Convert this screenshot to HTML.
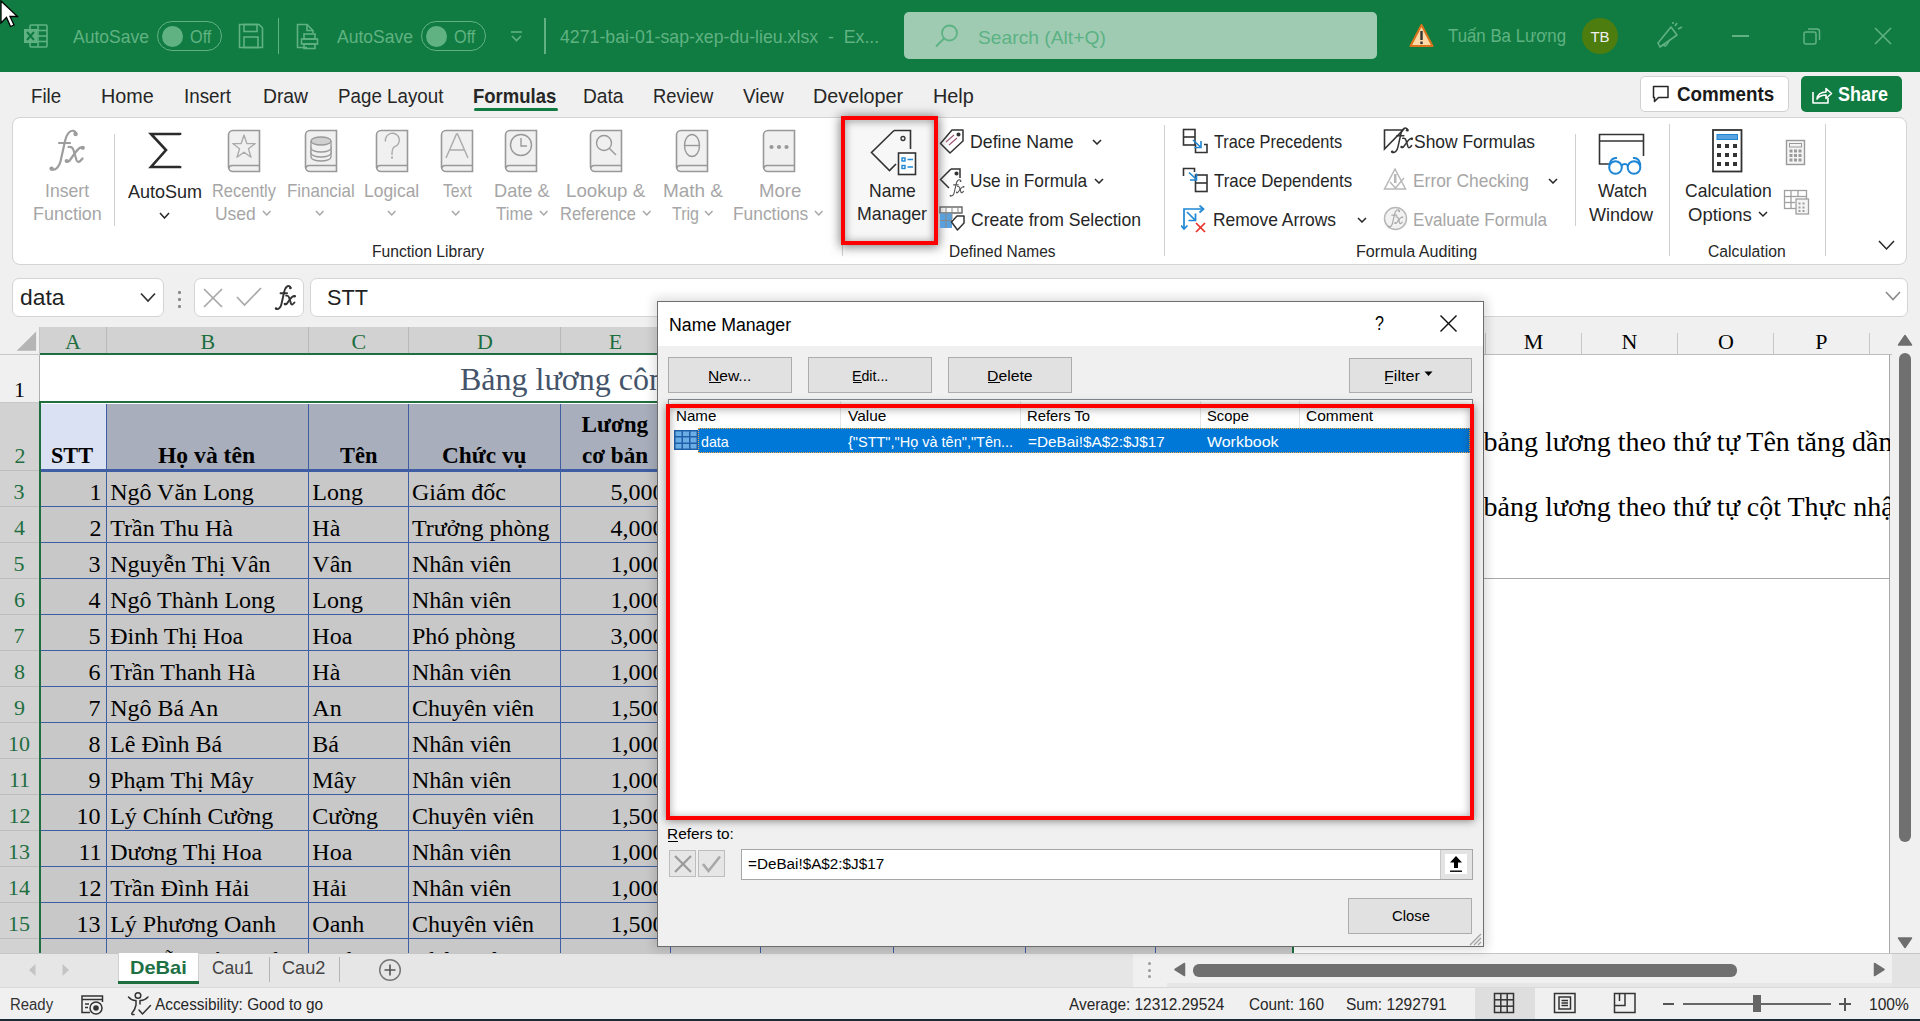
<!DOCTYPE html>
<html><head><meta charset="utf-8"><style>
html,body{margin:0;padding:0;}
body{width:1920px;height:1021px;position:relative;overflow:hidden;background:#f0f0f0}

</style></head><body>
<div style="position:absolute;left:0px;top:0px;width:1920px;height:72px;background:#107c41"></div>
<svg style="position:absolute;left:22px;top:22px;" width="28" height="28" viewBox="0 0 28 28"><g fill="none" stroke="#60b283" stroke-width="1.6">
<rect x="8" y="3" width="17" height="22" rx="1"/>
<line x1="8" y1="8.5" x2="25" y2="8.5"/><line x1="8" y1="14" x2="25" y2="14"/><line x1="8" y1="19.5" x2="25" y2="19.5"/>
<line x1="16" y1="3" x2="16" y2="25"/></g>
<rect x="2" y="7" width="13" height="14" fill="#60b283"/>
<path d="M5 10 L12 18 M12 10 L5 18" stroke="#107c41" stroke-width="2"/></svg>
<span style="position:absolute;left:72.50px;top:26.85px;font-family:'Liberation Sans', sans-serif;font-size:19px;line-height:1;font-weight:400;color:#60b283;white-space:pre;transform:scaleX(0.9227);transform-origin:0 0;">AutoSave</span>
<div style="position:absolute;left:157px;top:21px;width:63px;height:28px;border:1.3px solid #60b283;border-radius:16px;box-sizing:content-box"></div>
<div style="position:absolute;left:162px;top:25.5px;width:21px;height:21px;border-radius:50%;background:#60b283"></div>
<span style="position:absolute;left:190.00px;top:26.85px;font-family:'Liberation Sans', sans-serif;font-size:19px;line-height:1;font-weight:400;color:#60b283;white-space:pre;transform:scaleX(0.8556);transform-origin:0 0;">Off</span>
<svg style="position:absolute;left:238px;top:23px;" width="26" height="26" viewBox="0 0 26 26"><g fill="none" stroke="#60b283" stroke-width="1.6">
<path d="M1.5 1.5 H21 L24.5 5 V24.5 H1.5 Z"/><rect x="6" y="1.5" width="13" height="7"/><rect x="6" y="14" width="14" height="10.5"/></g></svg>
<div style="position:absolute;left:277.5px;top:18px;width:1.5px;height:36px;background:#60b283"></div>
<svg style="position:absolute;left:295px;top:23px;" width="26" height="27" viewBox="0 0 26 27"><g fill="none" stroke="#60b283" stroke-width="1.6">
<path d="M12 24.5 H2.5 V1.5 H12 L18 7.5 V10"/><path d="M12 1.5 V7.5 H18"/>
<rect x="9" y="11" width="11" height="5"/><rect x="6.5" y="16" width="16" height="5"/><rect x="9" y="21" width="11" height="4.5"/></g></svg>
<span style="position:absolute;left:336.50px;top:26.85px;font-family:'Liberation Sans', sans-serif;font-size:19px;line-height:1;font-weight:400;color:#60b283;white-space:pre;transform:scaleX(0.9227);transform-origin:0 0;">AutoSave</span>
<div style="position:absolute;left:421px;top:21px;width:63px;height:28px;border:1.3px solid #60b283;border-radius:16px;box-sizing:content-box"></div>
<div style="position:absolute;left:426px;top:25.5px;width:21px;height:21px;border-radius:50%;background:#60b283"></div>
<span style="position:absolute;left:454.00px;top:26.85px;font-family:'Liberation Sans', sans-serif;font-size:19px;line-height:1;font-weight:400;color:#60b283;white-space:pre;transform:scaleX(0.8556);transform-origin:0 0;">Off</span>
<svg style="position:absolute;left:509px;top:30px;" width="15" height="13" viewBox="0 0 15 13"><g fill="none" stroke="#60b283" stroke-width="1.6"><line x1="2" y1="2" x2="13" y2="2"/><path d="M3 6 L7.5 10.5 L12 6"/></g></svg>
<div style="position:absolute;left:544px;top:18px;width:1.5px;height:36px;background:#60b283"></div>
<span style="position:absolute;left:560.00px;top:27.15px;font-family:'Liberation Sans', sans-serif;font-size:19px;line-height:1;font-weight:400;color:#60b283;white-space:pre;transform:scaleX(0.9329);transform-origin:0 0;">4271-bai-01-sap-xep-du-lieu.xlsx  -  Ex...</span>
<div style="position:absolute;left:904px;top:12px;width:473px;height:47.3px;background:#a0cbb3;border-radius:5px"></div>
<svg style="position:absolute;left:934px;top:23px;" width="26" height="26" viewBox="0 0 26 26"><g fill="none" stroke="#5bb283" stroke-width="1.8"><circle cx="15.5" cy="10" r="7.5"/><line x1="10" y1="15.5" x2="2" y2="23.5"/></g></svg>
<span style="position:absolute;left:977.50px;top:27.55px;font-family:'Liberation Sans', sans-serif;font-size:19px;line-height:1;font-weight:400;color:#5bb283;white-space:pre;transform:scaleX(1.0131);transform-origin:0 0;">Search (Alt+Q)</span>
<svg style="position:absolute;left:1408px;top:23px;" width="27" height="25" viewBox="0 0 27 25"><path d="M13.5 2 L24.5 23 H2.5 Z" fill="#fcd9a6" stroke="#d9731c" stroke-width="2" stroke-linejoin="round"/><rect x="12.3" y="8" width="2.4" height="9" fill="#333"/><rect x="12.3" y="18.5" width="2.4" height="2.6" fill="#333"/></svg>
<span style="position:absolute;left:1447.50px;top:25.85px;font-family:'Liberation Sans', sans-serif;font-size:19px;line-height:1;font-weight:400;color:#60b283;white-space:pre;transform:scaleX(0.8854);transform-origin:0 0;">Tuấn Ba Lương</span>
<div style="position:absolute;left:1582px;top:18px;width:36px;height:36px;background:#4d7c0f;border-radius:50%"></div>
<span style="position:absolute;left:1590.42px;top:29.25px;font-family:'Liberation Sans', sans-serif;font-size:15px;line-height:1;font-weight:400;color:#f0f0f0;white-space:pre;">TB</span>
<svg style="position:absolute;left:1655px;top:21px;" width="30" height="28" viewBox="0 0 30 28"><g fill="none" stroke="#60b283" stroke-width="1.6" stroke-linejoin="round"><path d="M3 22 L16 6 L22 14 L5 26 Z"/><path d="M8 23 Q10 28 14 20"/><line x1="20" y1="5" x2="22" y2="2"/><line x1="23" y1="8" x2="27" y2="6"/><line x1="18" y1="3" x2="18" y2="1"/></g></svg>
<div style="position:absolute;left:1732px;top:35px;width:17px;height:1.5px;background:#60b283"></div>
<svg style="position:absolute;left:1802px;top:26px;" width="20" height="20" viewBox="0 0 20 20"><g fill="none" stroke="#60b283" stroke-width="1.5"><rect x="2" y="6" width="12" height="12" rx="2"/><path d="M6 3 H15 A2.5 2.5 0 0 1 17.5 5.5 V14"/></g></svg>
<svg style="position:absolute;left:1873px;top:26px;" width="20" height="20" viewBox="0 0 20 20"><g stroke="#60b283" stroke-width="1.6"><line x1="2" y1="2" x2="18" y2="18"/><line x1="18" y1="2" x2="2" y2="18"/></g></svg>
<span style="position:absolute;left:30.99px;top:85.88px;font-family:'Liberation Sans', sans-serif;font-size:20.5px;line-height:1;font-weight:400;color:#262626;white-space:pre;transform:scaleX(0.9105);transform-origin:0 0;">File</span>
<span style="position:absolute;left:101.34px;top:85.88px;font-family:'Liberation Sans', sans-serif;font-size:20.5px;line-height:1;font-weight:400;color:#262626;white-space:pre;transform:scaleX(0.9647);transform-origin:0 0;">Home</span>
<span style="position:absolute;left:184.48px;top:85.88px;font-family:'Liberation Sans', sans-serif;font-size:20.5px;line-height:1;font-weight:400;color:#262626;white-space:pre;transform:scaleX(0.9175);transform-origin:0 0;">Insert</span>
<span style="position:absolute;left:262.56px;top:85.88px;font-family:'Liberation Sans', sans-serif;font-size:20.5px;line-height:1;font-weight:400;color:#262626;white-space:pre;transform:scaleX(0.9419);transform-origin:0 0;">Draw</span>
<span style="position:absolute;left:337.59px;top:85.88px;font-family:'Liberation Sans', sans-serif;font-size:20.5px;line-height:1;font-weight:400;color:#262626;white-space:pre;transform:scaleX(0.9150);transform-origin:0 0;">Page Layout</span>
<span style="position:absolute;left:473.40px;top:85.88px;font-family:'Liberation Sans', sans-serif;font-size:20.5px;line-height:1;font-weight:700;color:#262626;white-space:pre;transform:scaleX(0.9024);transform-origin:0 0;">Formulas</span>
<span style="position:absolute;left:583.47px;top:85.88px;font-family:'Liberation Sans', sans-serif;font-size:20.5px;line-height:1;font-weight:400;color:#262626;white-space:pre;transform:scaleX(0.9347);transform-origin:0 0;">Data</span>
<span style="position:absolute;left:652.71px;top:85.88px;font-family:'Liberation Sans', sans-serif;font-size:20.5px;line-height:1;font-weight:400;color:#262626;white-space:pre;transform:scaleX(0.8944);transform-origin:0 0;">Review</span>
<span style="position:absolute;left:743.00px;top:85.88px;font-family:'Liberation Sans', sans-serif;font-size:20.5px;line-height:1;font-weight:400;color:#262626;white-space:pre;transform:scaleX(0.9264);transform-origin:0 0;">View</span>
<span style="position:absolute;left:813.03px;top:85.88px;font-family:'Liberation Sans', sans-serif;font-size:20.5px;line-height:1;font-weight:400;color:#262626;white-space:pre;transform:scaleX(0.9653);transform-origin:0 0;">Developer</span>
<span style="position:absolute;left:933.33px;top:85.88px;font-family:'Liberation Sans', sans-serif;font-size:20.5px;line-height:1;font-weight:400;color:#262626;white-space:pre;transform:scaleX(0.9666);transform-origin:0 0;">Help</span>
<div style="position:absolute;left:474px;top:108px;width:84px;height:3px;background:#107c41;border-radius:2px"></div>
<div style="position:absolute;left:1640px;top:76px;width:148.5px;height:36px;background:#fff;border:1px solid #d1d1d1;border-radius:5px;box-sizing:border-box"></div>
<svg style="position:absolute;left:1651px;top:84px;" width="20" height="20" viewBox="0 0 20 20"><path d="M2.5 2.5 H17 V13.5 H7.5 L3.5 17.5 V13.5 H2.5 Z" fill="none" stroke="#262626" stroke-width="1.5" stroke-linejoin="round"/></svg>
<span style="position:absolute;left:1676.60px;top:85.02px;font-family:'Liberation Sans', sans-serif;font-size:19.5px;line-height:1;font-weight:700;color:#1a1a1a;white-space:pre;transform:scaleX(0.9651);transform-origin:0 0;">Comments</span>
<div style="position:absolute;left:1801px;top:76px;width:101px;height:36px;background:#107c41;border-radius:5px"></div>
<svg style="position:absolute;left:1810px;top:83px;" width="24" height="22" viewBox="0 0 24 22"><g fill="none" stroke="#fff" stroke-width="1.6" stroke-linejoin="round"><path d="M3 9 V20 H18 V15"/><path d="M7 16 Q8 9 16 9 V5.5 L21.5 10.5 L16 15.5 V12 Q10 12 7 16 Z"/></g></svg>
<span style="position:absolute;left:1837.50px;top:85.02px;font-family:'Liberation Sans', sans-serif;font-size:19.5px;line-height:1;font-weight:700;color:#fff;white-space:pre;transform:scaleX(0.9199);transform-origin:0 0;">Share</span>
<div style="position:absolute;left:12px;top:117px;width:1895px;height:148px;background:#fff;border:1px solid #d4d4d4;border-radius:8px;box-sizing:border-box"></div>
<svg style="position:absolute;left:48px;top:129px;" width="39" height="46" viewBox="0 0 39 46"><g transform="scale(1.0000)" fill="none" stroke="#9d9d9d" stroke-width="2.200" stroke-linecap="round">
<path d="M28 4.8 C27.5 1.6 24 0.8 21.5 3 C19 5 17.6 9 16.6 14 L12.6 32 C11.5 37 8 41.5 4.2 40.6"/>
<path d="M11 14 H22"/>
<path d="M20.5 18 C23 17.5 24.5 18 25.5 21 L28.5 31 C29.5 34 31.5 33.5 34.5 29.5"/>
<path d="M35 18.6 C32 17.6 30 20 27 24 L22 31 C20.5 33 19 33 18 32"/>
</g><g transform="scale(1.0000)" fill="#9d9d9d"><circle cx="27.6" cy="5" r="2.2"/><circle cx="3.6" cy="39.6" r="2.2"/><circle cx="34.8" cy="18.8" r="2.1"/><circle cx="18.6" cy="32" r="2"/></g></svg>
<span style="position:absolute;left:44.78px;top:182.03px;font-family:'Liberation Sans', sans-serif;font-size:18.2px;line-height:1;font-weight:400;color:#a6a6a6;white-space:pre;transform:scaleX(0.9677);transform-origin:0 0;">Insert</span>
<span style="position:absolute;left:32.76px;top:205.28px;font-family:'Liberation Sans', sans-serif;font-size:18.2px;line-height:1;font-weight:400;color:#a6a6a6;white-space:pre;transform:scaleX(0.9868);transform-origin:0 0;">Function</span>
<div style="position:absolute;left:114px;top:134px;width:1.2999999999999972px;height:92px;background:#d0d0d0"></div>
<svg style="position:absolute;left:146px;top:131px;" width="38" height="40" viewBox="0 0 38 40"><path d="M34 4 V3 H5 L20 19 L5 36 H34 V35" fill="none" stroke="#2b2b2b" stroke-width="2.6" stroke-linejoin="miter"/></svg>
<span style="position:absolute;left:127.50px;top:183.28px;font-family:'Liberation Sans', sans-serif;font-size:18.2px;line-height:1;font-weight:400;color:#262626;white-space:pre;transform:scaleX(0.9910);transform-origin:0 0;">AutoSum</span>
<svg style="position:absolute;left:159px;top:211.5px;" width="11" height="7.5" viewBox="0 0 11 7.5"><path d="M1 1 L5.5 6.0 L10 1" fill="none" stroke="#262626" stroke-width="1.5"/></svg>
<svg style="position:absolute;left:227.4px;top:129px;" width="35" height="44" viewBox="0 0 35 44"><path d="M6 1.5 H32.5 V42.5 H6 A4.5 4.5 0 0 1 1.5 38 V6 A4.5 4.5 0 0 1 6 1.5 Z" fill="#f0f0f0" stroke="#999" stroke-width="1.6"/>
<path d="M1.8 39 A3.5 3.5 0 0 1 5.5 36.5 H32.5" fill="none" stroke="#999" stroke-width="1.6"/><path d="M17 6 L19.8 14.5 L28.3 14.6 L21.4 19.8 L24 28.3 L17 23.2 L10 28.3 L12.6 19.8 L5.7 14.6 L14.2 14.5 Z" fill="none" stroke="#aaa" stroke-width="1.3" stroke-linejoin="round"/></svg>
<svg style="position:absolute;left:303.6px;top:129px;" width="35" height="44" viewBox="0 0 35 44"><path d="M6 1.5 H32.5 V42.5 H6 A4.5 4.5 0 0 1 1.5 38 V6 A4.5 4.5 0 0 1 6 1.5 Z" fill="#f0f0f0" stroke="#999" stroke-width="1.6"/>
<path d="M1.8 39 A3.5 3.5 0 0 1 5.5 36.5 H32.5" fill="none" stroke="#999" stroke-width="1.6"/><g fill="#f0f0f0" stroke="#999" stroke-width="1.3"><path d="M7 21 V28 A10 4 0 0 0 27 28 V21"/><path d="M7 17 V24 A10 4 0 0 0 27 24 V17"/><path d="M7 12 V19 A10 4 0 0 0 27 19 V12"/><ellipse cx="17" cy="12" rx="10" ry="4" fill="#d0d0d0"/></g></svg>
<svg style="position:absolute;left:374.7px;top:129px;" width="35" height="44" viewBox="0 0 35 44"><path d="M6 1.5 H32.5 V42.5 H6 A4.5 4.5 0 0 1 1.5 38 V6 A4.5 4.5 0 0 1 6 1.5 Z" fill="#f0f0f0" stroke="#999" stroke-width="1.6"/>
<path d="M1.8 39 A3.5 3.5 0 0 1 5.5 36.5 H32.5" fill="none" stroke="#999" stroke-width="1.6"/><path d="M10.5 12.5 A7 7 0 1 1 19 18 Q17 20 17 24 V26" fill="none" stroke="#aaa" stroke-width="1.4"/><rect x="16" y="27.5" width="2" height="2" fill="#aaa"/></svg>
<svg style="position:absolute;left:439.7px;top:129px;" width="35" height="44" viewBox="0 0 35 44"><path d="M6 1.5 H32.5 V42.5 H6 A4.5 4.5 0 0 1 1.5 38 V6 A4.5 4.5 0 0 1 6 1.5 Z" fill="#f0f0f0" stroke="#999" stroke-width="1.6"/>
<path d="M1.8 39 A3.5 3.5 0 0 1 5.5 36.5 H32.5" fill="none" stroke="#999" stroke-width="1.6"/><path d="M6 29 L16.5 5 H17.5 L28 29 M9.5 21 H24.5" fill="none" stroke="#aaa" stroke-width="1.4"/></svg>
<svg style="position:absolute;left:504px;top:129px;" width="35" height="44" viewBox="0 0 35 44"><path d="M6 1.5 H32.5 V42.5 H6 A4.5 4.5 0 0 1 1.5 38 V6 A4.5 4.5 0 0 1 6 1.5 Z" fill="#f0f0f0" stroke="#999" stroke-width="1.6"/>
<path d="M1.8 39 A3.5 3.5 0 0 1 5.5 36.5 H32.5" fill="none" stroke="#999" stroke-width="1.6"/><circle cx="17" cy="16" r="10.5" fill="none" stroke="#999" stroke-width="1.4"/><path d="M17 9 V17 H23" fill="none" stroke="#999" stroke-width="1.4"/></svg>
<svg style="position:absolute;left:589px;top:129px;" width="35" height="44" viewBox="0 0 35 44"><path d="M6 1.5 H32.5 V42.5 H6 A4.5 4.5 0 0 1 1.5 38 V6 A4.5 4.5 0 0 1 6 1.5 Z" fill="#f0f0f0" stroke="#999" stroke-width="1.6"/>
<path d="M1.8 39 A3.5 3.5 0 0 1 5.5 36.5 H32.5" fill="none" stroke="#999" stroke-width="1.6"/><circle cx="15" cy="14" r="7.5" fill="none" stroke="#999" stroke-width="1.4"/><line x1="20.5" y1="19.5" x2="27" y2="26" stroke="#999" stroke-width="1.4"/></svg>
<svg style="position:absolute;left:675px;top:129px;" width="35" height="44" viewBox="0 0 35 44"><path d="M6 1.5 H32.5 V42.5 H6 A4.5 4.5 0 0 1 1.5 38 V6 A4.5 4.5 0 0 1 6 1.5 Z" fill="#f0f0f0" stroke="#999" stroke-width="1.6"/>
<path d="M1.8 39 A3.5 3.5 0 0 1 5.5 36.5 H32.5" fill="none" stroke="#999" stroke-width="1.6"/><ellipse cx="17" cy="16.5" rx="7.5" ry="11" fill="none" stroke="#999" stroke-width="1.4"/><line x1="9.5" y1="16.5" x2="24.5" y2="16.5" stroke="#999" stroke-width="1.4"/></svg>
<svg style="position:absolute;left:762px;top:129px;" width="35" height="44" viewBox="0 0 35 44"><path d="M6 1.5 H32.5 V42.5 H6 A4.5 4.5 0 0 1 1.5 38 V6 A4.5 4.5 0 0 1 6 1.5 Z" fill="#f0f0f0" stroke="#999" stroke-width="1.6"/>
<path d="M1.8 39 A3.5 3.5 0 0 1 5.5 36.5 H32.5" fill="none" stroke="#999" stroke-width="1.6"/><g fill="#999"><circle cx="9.5" cy="18" r="2.1"/><circle cx="17" cy="18" r="2.1"/><circle cx="24.5" cy="18" r="2.1"/></g></svg>
<span style="position:absolute;left:211.60px;top:182.03px;font-family:'Liberation Sans', sans-serif;font-size:18.2px;line-height:1;font-weight:400;color:#a6a6a6;white-space:pre;transform:scaleX(0.9021);transform-origin:0 0;">Recently</span>
<span style="position:absolute;left:215.29px;top:205.28px;font-family:'Liberation Sans', sans-serif;font-size:18.2px;line-height:1;font-weight:400;color:#a6a6a6;white-space:pre;transform:scaleX(0.9605);transform-origin:0 0;">Used</span>
<svg style="position:absolute;left:262px;top:210px;" width="9.5" height="6.5" viewBox="0 0 9.5 6.5"><path d="M1 1 L4.75 5.0 L8.5 1" fill="none" stroke="#a6a6a6" stroke-width="1.5"/></svg>
<span style="position:absolute;left:286.57px;top:182.03px;font-family:'Liberation Sans', sans-serif;font-size:18.2px;line-height:1;font-weight:400;color:#a6a6a6;white-space:pre;transform:scaleX(0.9294);transform-origin:0 0;">Financial</span>
<svg style="position:absolute;left:315px;top:210px;" width="9.5" height="6.5" viewBox="0 0 9.5 6.5"><path d="M1 1 L4.75 5.0 L8.5 1" fill="none" stroke="#a6a6a6" stroke-width="1.5"/></svg>
<span style="position:absolute;left:364.04px;top:182.03px;font-family:'Liberation Sans', sans-serif;font-size:18.2px;line-height:1;font-weight:400;color:#a6a6a6;white-space:pre;transform:scaleX(0.9578);transform-origin:0 0;">Logical</span>
<svg style="position:absolute;left:386.5px;top:210px;" width="9.5" height="6.5" viewBox="0 0 9.5 6.5"><path d="M1 1 L4.75 5.0 L8.5 1" fill="none" stroke="#a6a6a6" stroke-width="1.5"/></svg>
<span style="position:absolute;left:442.50px;top:182.03px;font-family:'Liberation Sans', sans-serif;font-size:18.2px;line-height:1;font-weight:400;color:#a6a6a6;white-space:pre;transform:scaleX(0.8633);transform-origin:0 0;">Text</span>
<svg style="position:absolute;left:451px;top:210px;" width="9.5" height="6.5" viewBox="0 0 9.5 6.5"><path d="M1 1 L4.75 5.0 L8.5 1" fill="none" stroke="#a6a6a6" stroke-width="1.5"/></svg>
<span style="position:absolute;left:494.00px;top:182.03px;font-family:'Liberation Sans', sans-serif;font-size:18.2px;line-height:1;font-weight:400;color:#a6a6a6;white-space:pre;">Date &</span>
<span style="position:absolute;left:495.75px;top:205.28px;font-family:'Liberation Sans', sans-serif;font-size:18.2px;line-height:1;font-weight:400;color:#a6a6a6;white-space:pre;transform:scaleX(0.9274);transform-origin:0 0;">Time</span>
<svg style="position:absolute;left:539px;top:210px;" width="9.5" height="6.5" viewBox="0 0 9.5 6.5"><path d="M1 1 L4.75 5.0 L8.5 1" fill="none" stroke="#a6a6a6" stroke-width="1.5"/></svg>
<span style="position:absolute;left:566.47px;top:182.03px;font-family:'Liberation Sans', sans-serif;font-size:18.2px;line-height:1;font-weight:400;color:#a6a6a6;white-space:pre;transform:scaleX(1.0301);transform-origin:0 0;">Lookup &</span>
<span style="position:absolute;left:559.59px;top:205.28px;font-family:'Liberation Sans', sans-serif;font-size:18.2px;line-height:1;font-weight:400;color:#a6a6a6;white-space:pre;transform:scaleX(0.9058);transform-origin:0 0;">Reference</span>
<svg style="position:absolute;left:641.5px;top:210px;" width="9.5" height="6.5" viewBox="0 0 9.5 6.5"><path d="M1 1 L4.75 5.0 L8.5 1" fill="none" stroke="#a6a6a6" stroke-width="1.5"/></svg>
<span style="position:absolute;left:662.71px;top:182.03px;font-family:'Liberation Sans', sans-serif;font-size:18.2px;line-height:1;font-weight:400;color:#a6a6a6;white-space:pre;transform:scaleX(1.0401);transform-origin:0 0;">Math &</span>
<span style="position:absolute;left:672.00px;top:205.28px;font-family:'Liberation Sans', sans-serif;font-size:18.2px;line-height:1;font-weight:400;color:#a6a6a6;white-space:pre;transform:scaleX(0.8804);transform-origin:0 0;">Trig</span>
<svg style="position:absolute;left:704px;top:210px;" width="9.5" height="6.5" viewBox="0 0 9.5 6.5"><path d="M1 1 L4.75 5.0 L8.5 1" fill="none" stroke="#a6a6a6" stroke-width="1.5"/></svg>
<span style="position:absolute;left:758.98px;top:182.03px;font-family:'Liberation Sans', sans-serif;font-size:18.2px;line-height:1;font-weight:400;color:#a6a6a6;white-space:pre;transform:scaleX(1.0230);transform-origin:0 0;">More</span>
<span style="position:absolute;left:732.80px;top:205.28px;font-family:'Liberation Sans', sans-serif;font-size:18.2px;line-height:1;font-weight:400;color:#a6a6a6;white-space:pre;transform:scaleX(0.9549);transform-origin:0 0;">Functions</span>
<svg style="position:absolute;left:814px;top:210px;" width="9.5" height="6.5" viewBox="0 0 9.5 6.5"><path d="M1 1 L4.75 5.0 L8.5 1" fill="none" stroke="#a6a6a6" stroke-width="1.5"/></svg>
<span style="position:absolute;left:371.54px;top:243.15px;font-family:'Liberation Sans', sans-serif;font-size:16.3px;line-height:1;font-weight:400;color:#262626;white-space:pre;transform:scaleX(0.9606);transform-origin:0 0;">Function Library</span>
<div style="position:absolute;left:841.5px;top:230px;width:1.2999999999999545px;height:26px;background:#d0d0d0"></div>
<div style="position:absolute;left:845px;top:121px;width:89px;height:120px;background:#f7f7f7"></div>
<svg style="position:absolute;left:868px;top:127px;" width="52" height="52" viewBox="0 0 52 52"><path d="M26 3.5 H42.5 V22" fill="none" stroke="#333" stroke-width="1.6"/>
<path d="M26 3.5 L3.5 25.5 L21.5 43.5 L28 37" fill="none" stroke="#333" stroke-width="1.6" stroke-linejoin="miter"/>
<circle cx="35" cy="11.5" r="2" fill="none" stroke="#333" stroke-width="1.3"/>
<rect x="30.5" y="26" width="17" height="21.5" fill="#fff" stroke="#333" stroke-width="1.6"/>
<g fill="none" stroke="#1e86d4" stroke-width="1.4"><rect x="34" y="31" width="3" height="3"/><rect x="34" y="38.5" width="3" height="3"/></g>
<g stroke="#1e86d4" stroke-width="1.5"><line x1="39.5" y1="32.5" x2="45" y2="32.5"/><line x1="39.5" y1="40" x2="45" y2="40"/></g></svg>
<span style="position:absolute;left:869.03px;top:182.03px;font-family:'Liberation Sans', sans-serif;font-size:18.2px;line-height:1;font-weight:400;color:#262626;white-space:pre;transform:scaleX(0.9652);transform-origin:0 0;">Name</span>
<span style="position:absolute;left:857.02px;top:205.28px;font-family:'Liberation Sans', sans-serif;font-size:18.2px;line-height:1;font-weight:400;color:#262626;white-space:pre;transform:scaleX(0.9756);transform-origin:0 0;">Manager</span>
<div style="position:absolute;left:841px;top:116px;width:97px;height:129px;border:4px solid #f00;box-sizing:border-box;box-shadow:0 1px 10px 1px rgba(0,0,0,.5), inset 0 1px 9px rgba(0,0,0,.4)"></div>
<svg style="position:absolute;left:938px;top:127px;" width="28" height="28" viewBox="0 0 28 28"><g fill="none" stroke="#333" stroke-width="1.5" stroke-linejoin="round"><path d="M14 3 H25 V14 L12 26 L2.5 16.5 Z"/><circle cx="20.5" cy="7.5" r="1.3" fill="#333"/><path d="M8 15 L16 8 M11 18 L19 11" stroke="#a05a7a" stroke-width="1.2"/></g></svg>
<svg style="position:absolute;left:938px;top:166px;" width="30" height="30" viewBox="0 0 30 30"><g fill="none" stroke="#333" stroke-width="1.5"><path d="M13 3 H22 V12"/><path d="M13 3 L2.5 13.5 L11 22"/><circle cx="18.5" cy="7.5" r="1.3" fill="#333"/></g></svg>
<svg style="position:absolute;left:938px;top:205px;" width="28" height="26" viewBox="0 0 28 26"><g><rect x="2" y="2" width="22" height="6" fill="none" stroke="#555" stroke-width="1.3"/><rect x="2" y="8" width="12" height="15" fill="#5aa0dc"/><path d="M2 8 H24 M2 15.5 H14 M8 2 V23 M14 2 V14 M20 2 V8" stroke="#888" stroke-width="1"/></g><path d="M13.5 17 L19 11 H26 V18 L19.5 25 Z" fill="#fff" stroke="#333" stroke-width="1.5" stroke-linejoin="round"/></svg>
<span style="position:absolute;left:969.52px;top:132.53px;font-family:'Liberation Sans', sans-serif;font-size:18.2px;line-height:1;font-weight:400;color:#262626;white-space:pre;transform:scaleX(0.9759);transform-origin:0 0;">Define Name</span>
<svg style="position:absolute;left:1091.5px;top:138.5px;" width="10" height="6.5" viewBox="0 0 10 6.5"><path d="M1 1 L5.0 5.0 L9 1" fill="none" stroke="#262626" stroke-width="1.5"/></svg>
<svg style="position:absolute;left:949px;top:179px;" width="17" height="20" viewBox="0 0 17 20"><g transform="scale(0.4186)" fill="none" stroke="#555" stroke-width="2.628" stroke-linecap="round">
<path d="M28 4.8 C27.5 1.6 24 0.8 21.5 3 C19 5 17.6 9 16.6 14 L12.6 32 C11.5 37 8 41.5 4.2 40.6"/>
<path d="M11 14 H22"/>
<path d="M20.5 18 C23 17.5 24.5 18 25.5 21 L28.5 31 C29.5 34 31.5 33.5 34.5 29.5"/>
<path d="M35 18.6 C32 17.6 30 20 27 24 L22 31 C20.5 33 19 33 18 32"/>
</g><g transform="scale(0.4186)" fill="#555"><circle cx="27.6" cy="5" r="2.2"/><circle cx="3.6" cy="39.6" r="2.2"/><circle cx="34.8" cy="18.8" r="2.1"/><circle cx="18.6" cy="32" r="2"/></g></svg>
<span style="position:absolute;left:969.55px;top:171.53px;font-family:'Liberation Sans', sans-serif;font-size:18.2px;line-height:1;font-weight:400;color:#262626;white-space:pre;transform:scaleX(0.9497);transform-origin:0 0;">Use in Formula</span>
<svg style="position:absolute;left:1094px;top:177.5px;" width="10" height="6.5" viewBox="0 0 10 6.5"><path d="M1 1 L5.0 5.0 L9 1" fill="none" stroke="#262626" stroke-width="1.5"/></svg>
<span style="position:absolute;left:970.50px;top:210.53px;font-family:'Liberation Sans', sans-serif;font-size:18.2px;line-height:1;font-weight:400;color:#262626;white-space:pre;transform:scaleX(0.9670);transform-origin:0 0;">Create from Selection</span>
<span style="position:absolute;left:948.55px;top:243.15px;font-family:'Liberation Sans', sans-serif;font-size:16.3px;line-height:1;font-weight:400;color:#262626;white-space:pre;transform:scaleX(0.9498);transform-origin:0 0;">Defined Names</span>
<div style="position:absolute;left:1163.5px;top:124.5px;width:1.2999999999999545px;height:131.5px;background:#d0d0d0"></div>
<svg style="position:absolute;left:1181px;top:127px;" width="28" height="28" viewBox="0 0 28 28"><g fill="none" stroke="#333" stroke-width="1.6"><rect x="2.5" y="2.5" width="11.5" height="15.5"/><line x1="2.5" y1="10" x2="14" y2="10"/><path d="M14.5 17.5 V25.5 H26 V17.5 H23"/></g><g fill="none" stroke="#1e86d4" stroke-width="1.6"><line x1="12" y1="13" x2="19.5" y2="20"/><path d="M13.5 20.5 H20 V14"/></g></svg>
<svg style="position:absolute;left:1181px;top:166px;" width="28" height="28" viewBox="0 0 28 28"><g fill="none" stroke="#333" stroke-width="1.6"><path d="M2.5 10 V2.5 H13.5 V6"/><rect x="14.5" y="9" width="11.5" height="16.5"/><line x1="14.5" y1="17" x2="26" y2="17"/></g><g fill="none" stroke="#1e86d4" stroke-width="1.6"><line x1="8" y1="6.5" x2="15" y2="13"/><path d="M9 14 H15.5 V7.5"/></g></svg>
<svg style="position:absolute;left:1181px;top:205px;" width="28" height="28" viewBox="0 0 28 28"><g fill="none" stroke="#1e86d4" stroke-width="1.7"><path d="M3 24 V4 H22"/><path d="M18.5 0.5 L22.5 4 L18.5 7.5"/><path d="M0 20.5 L3 24 L6.5 20.5"/><line x1="6" y1="7" x2="14" y2="15"/><path d="M7.5 15.5 H14.5 V8.5"/></g><g stroke="#e8332a" stroke-width="1.7"><line x1="15" y1="18" x2="24" y2="27"/><line x1="24" y1="18" x2="15" y2="27"/></g></svg>
<span style="position:absolute;left:1214.00px;top:132.53px;font-family:'Liberation Sans', sans-serif;font-size:18.2px;line-height:1;font-weight:400;color:#262626;white-space:pre;transform:scaleX(0.8965);transform-origin:0 0;">Trace Precedents</span>
<span style="position:absolute;left:1214.00px;top:171.53px;font-family:'Liberation Sans', sans-serif;font-size:18.2px;line-height:1;font-weight:400;color:#262626;white-space:pre;transform:scaleX(0.9270);transform-origin:0 0;">Trace Dependents</span>
<span style="position:absolute;left:1213.04px;top:210.53px;font-family:'Liberation Sans', sans-serif;font-size:18.2px;line-height:1;font-weight:400;color:#262626;white-space:pre;transform:scaleX(0.9589);transform-origin:0 0;">Remove Arrows</span>
<svg style="position:absolute;left:1356.5px;top:216.5px;" width="10" height="6.5" viewBox="0 0 10 6.5"><path d="M1 1 L5.0 5.0 L9 1" fill="none" stroke="#262626" stroke-width="1.5"/></svg>
<svg style="position:absolute;left:1382px;top:127px;" width="32" height="30" viewBox="0 0 32 30"><path d="M2.5 3 H21 L2.5 22 Z" fill="none" stroke="#333" stroke-width="1.6"/></svg>
<svg style="position:absolute;left:1390px;top:127px;" width="25" height="30" viewBox="0 0 25 30"><g transform="scale(0.6279)" fill="none" stroke="#333" stroke-width="2.389" stroke-linecap="round">
<path d="M28 4.8 C27.5 1.6 24 0.8 21.5 3 C19 5 17.6 9 16.6 14 L12.6 32 C11.5 37 8 41.5 4.2 40.6"/>
<path d="M11 14 H22"/>
<path d="M20.5 18 C23 17.5 24.5 18 25.5 21 L28.5 31 C29.5 34 31.5 33.5 34.5 29.5"/>
<path d="M35 18.6 C32 17.6 30 20 27 24 L22 31 C20.5 33 19 33 18 32"/>
</g><g transform="scale(0.6279)" fill="#333"><circle cx="27.6" cy="5" r="2.2"/><circle cx="3.6" cy="39.6" r="2.2"/><circle cx="34.8" cy="18.8" r="2.1"/><circle cx="18.6" cy="32" r="2"/></g></svg>
<svg style="position:absolute;left:1382px;top:165px;" width="32" height="30" viewBox="0 0 32 30"><g fill="none" stroke="#b8b8b8" stroke-width="1.5"><path d="M13 4 L23.5 24 H2.5 Z"/><path d="M8 17 L13.5 23 L22 13"/></g><rect x="12" y="9" width="2.5" height="9" fill="#b8b8b8"/></svg>
<svg style="position:absolute;left:1382px;top:204px;" width="32" height="30" viewBox="0 0 32 30"><circle cx="13.5" cy="14.5" r="11" fill="#f2f2f2" stroke="#b8b8b8" stroke-width="1.5"/></svg>
<svg style="position:absolute;left:1386.5px;top:209px;" width="18" height="21" viewBox="0 0 18 21"><g transform="scale(0.4419)" fill="none" stroke="#aaa" stroke-width="2.716" stroke-linecap="round">
<path d="M28 4.8 C27.5 1.6 24 0.8 21.5 3 C19 5 17.6 9 16.6 14 L12.6 32 C11.5 37 8 41.5 4.2 40.6"/>
<path d="M11 14 H22"/>
<path d="M20.5 18 C23 17.5 24.5 18 25.5 21 L28.5 31 C29.5 34 31.5 33.5 34.5 29.5"/>
<path d="M35 18.6 C32 17.6 30 20 27 24 L22 31 C20.5 33 19 33 18 32"/>
</g><g transform="scale(0.4419)" fill="#aaa"><circle cx="27.6" cy="5" r="2.2"/><circle cx="3.6" cy="39.6" r="2.2"/><circle cx="34.8" cy="18.8" r="2.1"/><circle cx="18.6" cy="32" r="2"/></g></svg>
<span style="position:absolute;left:1414.00px;top:132.53px;font-family:'Liberation Sans', sans-serif;font-size:18.2px;line-height:1;font-weight:400;color:#262626;white-space:pre;transform:scaleX(0.9584);transform-origin:0 0;">Show Formulas</span>
<span style="position:absolute;left:1413.04px;top:171.53px;font-family:'Liberation Sans', sans-serif;font-size:18.2px;line-height:1;font-weight:400;color:#a6a6a6;white-space:pre;transform:scaleX(0.9566);transform-origin:0 0;">Error Checking</span>
<svg style="position:absolute;left:1547.5px;top:177.5px;" width="10" height="6.5" viewBox="0 0 10 6.5"><path d="M1 1 L5.0 5.0 L9 1" fill="none" stroke="#262626" stroke-width="1.5"/></svg>
<span style="position:absolute;left:1413.06px;top:210.53px;font-family:'Liberation Sans', sans-serif;font-size:18.2px;line-height:1;font-weight:400;color:#a6a6a6;white-space:pre;transform:scaleX(0.9409);transform-origin:0 0;">Evaluate Formula</span>
<span style="position:absolute;left:1355.51px;top:243.15px;font-family:'Liberation Sans', sans-serif;font-size:16.3px;line-height:1;font-weight:400;color:#262626;white-space:pre;transform:scaleX(0.9916);transform-origin:0 0;">Formula Auditing</span>
<div style="position:absolute;left:1575px;top:134px;width:1.2999999999999545px;height:92px;background:#d0d0d0"></div>
<svg style="position:absolute;left:1596px;top:131px;" width="52" height="46" viewBox="0 0 52 46"><g fill="none" stroke="#333" stroke-width="1.6"><path d="M13 33 H3.5 V3.5 H47.5 V25"/><line x1="3.5" y1="10" x2="47.5" y2="10"/></g><g fill="#fff" stroke="#1e86d4" stroke-width="2"><circle cx="19.5" cy="36.5" r="6.3"/><circle cx="38" cy="36.5" r="6.3"/><path d="M25.5 34.5 Q28.7 31.5 32 34.5" fill="none"/><path d="M13.3 34 Q15 26 21 27" fill="none"/><path d="M44.5 34 Q43 26 37 27" fill="none"/></g></svg>
<span style="position:absolute;left:1598.00px;top:181.53px;font-family:'Liberation Sans', sans-serif;font-size:18.2px;line-height:1;font-weight:400;color:#262626;white-space:pre;transform:scaleX(0.9648);transform-origin:0 0;">Watch</span>
<span style="position:absolute;left:1589.00px;top:205.53px;font-family:'Liberation Sans', sans-serif;font-size:18.2px;line-height:1;font-weight:400;color:#262626;white-space:pre;transform:scaleX(0.9916);transform-origin:0 0;">Window</span>
<div style="position:absolute;left:1669px;top:124px;width:1.2999999999999545px;height:132px;background:#d0d0d0"></div>
<svg style="position:absolute;left:1711px;top:128px;" width="33" height="46" viewBox="0 0 33 46"><rect x="2" y="2" width="28.5" height="41.5" fill="#fff" stroke="#333" stroke-width="1.8"/><rect x="6" y="6.5" width="20.5" height="5" fill="#5ba3de" stroke="#1e86d4" stroke-width="1"/><g fill="#333"><rect x="6" y="16" width="4" height="4"/><rect x="14" y="16" width="4" height="4"/><rect x="22" y="16" width="4" height="4"/><rect x="6" y="25" width="4" height="4"/><rect x="14" y="25" width="4" height="4"/><rect x="22" y="25" width="4" height="4"/><rect x="6" y="34" width="4" height="4"/><rect x="14" y="34" width="4" height="4"/><rect x="22" y="34" width="4" height="4"/></g></svg>
<span style="position:absolute;left:1685.00px;top:181.53px;font-family:'Liberation Sans', sans-serif;font-size:18.2px;line-height:1;font-weight:400;color:#262626;white-space:pre;transform:scaleX(0.9633);transform-origin:0 0;">Calculation</span>
<span style="position:absolute;left:1688.00px;top:205.53px;font-family:'Liberation Sans', sans-serif;font-size:18.2px;line-height:1;font-weight:400;color:#262626;white-space:pre;transform:scaleX(1.0162);transform-origin:0 0;">Options</span>
<svg style="position:absolute;left:1757.5px;top:211px;" width="10" height="6.5" viewBox="0 0 10 6.5"><path d="M1 1 L5.0 5.0 L9 1" fill="none" stroke="#262626" stroke-width="1.5"/></svg>
<svg style="position:absolute;left:1785px;top:139px;" width="22" height="28" viewBox="0 0 22 28"><rect x="1.5" y="1.5" width="18" height="24" fill="#f4f4f4" stroke="#9a9a9a" stroke-width="1.4"/><rect x="4.5" y="4.5" width="12" height="3.5" fill="none" stroke="#9a9a9a" stroke-width="1"/><g fill="#9a9a9a"><rect x="4.5" y="10.5" width="3" height="3"/><rect x="9" y="10.5" width="3" height="3"/><rect x="13.5" y="10.5" width="3" height="3"/><rect x="4.5" y="15" width="3" height="3"/><rect x="9" y="15" width="3" height="3"/><rect x="13.5" y="15" width="3" height="3"/><rect x="4.5" y="19.5" width="3" height="3"/><rect x="9" y="19.5" width="3" height="3"/><rect x="13.5" y="19.5" width="3" height="3"/></g></svg>
<svg style="position:absolute;left:1782px;top:188px;" width="28" height="28" viewBox="0 0 28 28"><g fill="none" stroke="#a0a0a0" stroke-width="1.3"><rect x="2.5" y="2.5" width="22" height="18"/><line x1="2.5" y1="8.5" x2="24.5" y2="8.5"/><line x1="2.5" y1="14.5" x2="13" y2="14.5"/><line x1="9" y1="2.5" x2="9" y2="20.5"/><line x1="16" y1="2.5" x2="16" y2="8.5"/></g><rect x="14" y="11" width="12.5" height="15" fill="#f4f4f4" stroke="#a0a0a0" stroke-width="1.3"/><g fill="#a0a0a0"><rect x="16.5" y="14.5" width="2" height="2"/><rect x="20.5" y="14.5" width="2" height="2"/><rect x="16.5" y="18.5" width="2" height="2"/><rect x="20.5" y="18.5" width="2" height="2"/><rect x="16.5" y="22" width="2" height="2"/><rect x="20.5" y="22" width="2" height="2"/></g></svg>
<span style="position:absolute;left:1708.00px;top:243.15px;font-family:'Liberation Sans', sans-serif;font-size:16.3px;line-height:1;font-weight:400;color:#262626;white-space:pre;transform:scaleX(0.9636);transform-origin:0 0;">Calculation</span>
<div style="position:absolute;left:1825px;top:124px;width:1.2999999999999545px;height:132px;background:#d0d0d0"></div>
<svg style="position:absolute;left:1878px;top:240px;" width="17" height="10.5" viewBox="0 0 17 10.5"><path d="M1 1 L8.5 9.0 L16 1" fill="none" stroke="#262626" stroke-width="1.5"/></svg>
<div style="position:absolute;left:12px;top:278px;width:152px;height:39px;background:#fff;border:1px solid #d4d4d4;border-radius:7px;box-sizing:border-box"></div>
<span style="position:absolute;left:19.70px;top:286.80px;font-family:'Liberation Sans', sans-serif;font-size:22px;line-height:1;font-weight:400;color:#1f1f1f;white-space:pre;transform:scaleX(1.0394);transform-origin:0 0;">data</span>
<svg style="position:absolute;left:139px;top:291px;" width="18" height="14" viewBox="0 0 18 14"><path d="M2 2.5 L9 10 L16 2.5" fill="none" stroke="#333" stroke-width="1.7"/></svg>
<div style="position:absolute;left:177.5px;top:290.5px;width:3.0px;height:3.0px;background:#8a8a8a;border-radius:1px"></div>
<div style="position:absolute;left:177.5px;top:297.5px;width:3.0px;height:3.0px;background:#8a8a8a;border-radius:1px"></div>
<div style="position:absolute;left:177.5px;top:304.5px;width:3.0px;height:3.0px;background:#8a8a8a;border-radius:1px"></div>
<div style="position:absolute;left:194px;top:278px;width:110px;height:39px;background:#fff;border:1px solid #d4d4d4;border-radius:7px;box-sizing:border-box"></div>
<svg style="position:absolute;left:202px;top:287px;" width="22" height="22" viewBox="0 0 22 22"><g stroke="#a8a8a8" stroke-width="1.7"><line x1="2" y1="2" x2="20" y2="20"/><line x1="20" y1="2" x2="2" y2="20"/></g></svg>
<svg style="position:absolute;left:235px;top:286px;" width="28" height="22" viewBox="0 0 28 22"><path d="M2 11 L9.5 19 L26 2" fill="none" stroke="#a8a8a8" stroke-width="1.7"/></svg>
<svg style="position:absolute;left:273.5px;top:285px;" width="24" height="28" viewBox="0 0 24 28"><g transform="scale(0.5930)" fill="none" stroke="#333" stroke-width="3.204" stroke-linecap="round">
<path d="M28 4.8 C27.5 1.6 24 0.8 21.5 3 C19 5 17.6 9 16.6 14 L12.6 32 C11.5 37 8 41.5 4.2 40.6"/>
<path d="M11 14 H22"/>
<path d="M20.5 18 C23 17.5 24.5 18 25.5 21 L28.5 31 C29.5 34 31.5 33.5 34.5 29.5"/>
<path d="M35 18.6 C32 17.6 30 20 27 24 L22 31 C20.5 33 19 33 18 32"/>
</g><g transform="scale(0.5930)" fill="#333"><circle cx="27.6" cy="5" r="2.2"/><circle cx="3.6" cy="39.6" r="2.2"/><circle cx="34.8" cy="18.8" r="2.1"/><circle cx="18.6" cy="32" r="2"/></g></svg>
<div style="position:absolute;left:310px;top:278px;width:1598px;height:39px;background:#fff;border:1px solid #d4d4d4;border-radius:7px;box-sizing:border-box"></div>
<span style="position:absolute;left:327.02px;top:286.80px;font-family:'Liberation Sans', sans-serif;font-size:22px;line-height:1;font-weight:400;color:#1f1f1f;white-space:pre;transform:scaleX(0.9847);transform-origin:0 0;">STT</span>
<svg style="position:absolute;left:1884px;top:290px;" width="20" height="12" viewBox="0 0 20 12"><path d="M2 2 L9 9.5 L16 2" fill="none" stroke="#8a8a8a" stroke-width="1.6"/></svg>
<div style="position:absolute;left:0;top:0;width:1892px;height:953px;overflow:hidden">
<div style="position:absolute;left:0px;top:327px;width:39.5px;height:27px;background:#f0f0f0"></div>
<svg style="position:absolute;left:16px;top:331px;" width="21" height="21" viewBox="0 0 21 21"><path d="M0.7 19.7 L20.1 0.5 V19.7 Z" fill="#b5b5b5"/></svg>
<div style="position:absolute;left:0px;top:353.5px;width:39.5px;height:1.0px;background:#c8c8c8"></div>
<div style="position:absolute;left:39.5px;top:327px;width:1253.5px;height:27px;background:#d2d2d2"></div>
<div style="position:absolute;left:1293px;top:327px;width:599px;height:27px;background:#f0f0f0"></div>
<div style="position:absolute;left:1293px;top:353.5px;width:599px;height:1.0px;background:#bdbdbd"></div>
<div style="position:absolute;left:106.0px;top:327px;width:1.0px;height:26px;background:#b9b9b9"></div>
<span style="position:absolute;left:65.00px;top:330.74px;font-family:'Liberation Serif', serif;font-size:22px;line-height:1;font-weight:400;color:#1e6e40;white-space:pre;">A</span>
<div style="position:absolute;left:308.0px;top:327px;width:1.0px;height:26px;background:#b9b9b9"></div>
<span style="position:absolute;left:200.50px;top:330.74px;font-family:'Liberation Serif', serif;font-size:22px;line-height:1;font-weight:400;color:#1e6e40;white-space:pre;">B</span>
<div style="position:absolute;left:408.0px;top:327px;width:1.0px;height:26px;background:#b9b9b9"></div>
<span style="position:absolute;left:351.50px;top:330.74px;font-family:'Liberation Serif', serif;font-size:22px;line-height:1;font-weight:400;color:#1e6e40;white-space:pre;">C</span>
<div style="position:absolute;left:560.0px;top:327px;width:1.0px;height:26px;background:#b9b9b9"></div>
<span style="position:absolute;left:477.00px;top:330.74px;font-family:'Liberation Serif', serif;font-size:22px;line-height:1;font-weight:400;color:#1e6e40;white-space:pre;">D</span>
<div style="position:absolute;left:669.5px;top:327px;width:1.0px;height:26px;background:#b9b9b9"></div>
<span style="position:absolute;left:608.75px;top:330.74px;font-family:'Liberation Serif', serif;font-size:22px;line-height:1;font-weight:400;color:#1e6e40;white-space:pre;">E</span>
<div style="position:absolute;left:759.5px;top:327px;width:1.0px;height:26px;background:#b9b9b9"></div>
<span style="position:absolute;left:709.00px;top:330.74px;font-family:'Liberation Serif', serif;font-size:22px;line-height:1;font-weight:400;color:#1e6e40;white-space:pre;">F</span>
<div style="position:absolute;left:892.5px;top:327px;width:1.0px;height:26px;background:#b9b9b9"></div>
<span style="position:absolute;left:818.50px;top:330.74px;font-family:'Liberation Serif', serif;font-size:22px;line-height:1;font-weight:400;color:#1e6e40;white-space:pre;">G</span>
<div style="position:absolute;left:1024.5px;top:327px;width:1.0px;height:26px;background:#b9b9b9"></div>
<span style="position:absolute;left:951.00px;top:330.74px;font-family:'Liberation Serif', serif;font-size:22px;line-height:1;font-weight:400;color:#1e6e40;white-space:pre;">H</span>
<div style="position:absolute;left:1154.5px;top:327px;width:1.0px;height:26px;background:#b9b9b9"></div>
<span style="position:absolute;left:1086.50px;top:330.74px;font-family:'Liberation Serif', serif;font-size:22px;line-height:1;font-weight:400;color:#1e6e40;white-space:pre;">I</span>
<div style="position:absolute;left:1292.5px;top:327px;width:1.0px;height:26px;background:#b9b9b9"></div>
<span style="position:absolute;left:1219.50px;top:330.74px;font-family:'Liberation Serif', serif;font-size:22px;line-height:1;font-weight:400;color:#1e6e40;white-space:pre;">J</span>
<div style="position:absolute;left:1484.5px;top:333px;width:1.0px;height:21px;background:#c6c6c6"></div>
<div style="position:absolute;left:1484.5px;top:333px;width:1.0px;height:21px;background:#c6c6c6"></div>
<div style="position:absolute;left:1581.0px;top:333px;width:1.0px;height:21px;background:#c6c6c6"></div>
<div style="position:absolute;left:1677.0px;top:333px;width:1.0px;height:21px;background:#c6c6c6"></div>
<div style="position:absolute;left:1772.8px;top:333px;width:1.0px;height:21px;background:#c6c6c6"></div>
<div style="position:absolute;left:1868.5px;top:333px;width:1.0px;height:21px;background:#c6c6c6"></div>
<span style="position:absolute;left:1523.75px;top:330.74px;font-family:'Liberation Serif', serif;font-size:22px;line-height:1;font-weight:400;color:#000;white-space:pre;">M</span>
<span style="position:absolute;left:1621.50px;top:330.74px;font-family:'Liberation Serif', serif;font-size:22px;line-height:1;font-weight:400;color:#000;white-space:pre;">N</span>
<span style="position:absolute;left:1717.90px;top:330.74px;font-family:'Liberation Serif', serif;font-size:22px;line-height:1;font-weight:400;color:#000;white-space:pre;">O</span>
<span style="position:absolute;left:1815.15px;top:330.74px;font-family:'Liberation Serif', serif;font-size:22px;line-height:1;font-weight:400;color:#000;white-space:pre;">P</span>
<div style="position:absolute;left:39.5px;top:352.5px;width:1253.5px;height:2.0px;background:#1e6e40"></div>
<div style="position:absolute;left:39px;top:327px;width:1px;height:27px;background:#c6c6c6"></div>
<div style="position:absolute;left:0px;top:354.5px;width:39px;height:47.5px;background:#f0f0f0"></div>
<div style="position:absolute;left:39px;top:354.5px;width:1px;height:47.5px;background:#b0b0b0"></div>
<div style="position:absolute;left:0px;top:401.5px;width:39px;height:1.0px;background:#c8c8c8"></div>
<span style="position:absolute;left:14.00px;top:378.74px;font-family:'Liberation Serif', serif;font-size:22px;line-height:1;font-weight:400;color:#000;white-space:pre;">1</span>
<div style="position:absolute;left:0px;top:402.5px;width:38.5px;height:550.5px;background:#d2d2d2"></div>
<div style="position:absolute;left:0px;top:469.5px;width:38.5px;height:1.0px;background:#bcbcbc"></div>
<span style="position:absolute;left:14.50px;top:444.74px;font-family:'Liberation Serif', serif;font-size:22px;line-height:1;font-weight:400;color:#1e6e40;white-space:pre;">2</span>
<div style="position:absolute;left:0px;top:505.5px;width:38.5px;height:1.0px;background:#bcbcbc"></div>
<span style="position:absolute;left:13.50px;top:480.74px;font-family:'Liberation Serif', serif;font-size:22px;line-height:1;font-weight:400;color:#1e6e40;white-space:pre;">3</span>
<div style="position:absolute;left:0px;top:541.5px;width:38.5px;height:1.0px;background:#bcbcbc"></div>
<span style="position:absolute;left:14.00px;top:516.74px;font-family:'Liberation Serif', serif;font-size:22px;line-height:1;font-weight:400;color:#1e6e40;white-space:pre;">4</span>
<div style="position:absolute;left:0px;top:577.5px;width:38.5px;height:1.0px;background:#bcbcbc"></div>
<span style="position:absolute;left:13.50px;top:552.74px;font-family:'Liberation Serif', serif;font-size:22px;line-height:1;font-weight:400;color:#1e6e40;white-space:pre;">5</span>
<div style="position:absolute;left:0px;top:613.5px;width:38.5px;height:1.0px;background:#bcbcbc"></div>
<span style="position:absolute;left:14.00px;top:588.74px;font-family:'Liberation Serif', serif;font-size:22px;line-height:1;font-weight:400;color:#1e6e40;white-space:pre;">6</span>
<div style="position:absolute;left:0px;top:649.5px;width:38.5px;height:1.0px;background:#bcbcbc"></div>
<span style="position:absolute;left:13.50px;top:624.74px;font-family:'Liberation Serif', serif;font-size:22px;line-height:1;font-weight:400;color:#1e6e40;white-space:pre;">7</span>
<div style="position:absolute;left:0px;top:685.5px;width:38.5px;height:1.0px;background:#bcbcbc"></div>
<span style="position:absolute;left:14.00px;top:660.74px;font-family:'Liberation Serif', serif;font-size:22px;line-height:1;font-weight:400;color:#1e6e40;white-space:pre;">8</span>
<div style="position:absolute;left:0px;top:721.5px;width:38.5px;height:1.0px;background:#bcbcbc"></div>
<span style="position:absolute;left:14.00px;top:696.74px;font-family:'Liberation Serif', serif;font-size:22px;line-height:1;font-weight:400;color:#1e6e40;white-space:pre;">9</span>
<div style="position:absolute;left:0px;top:757.5px;width:38.5px;height:1.0px;background:#bcbcbc"></div>
<span style="position:absolute;left:8.00px;top:732.74px;font-family:'Liberation Serif', serif;font-size:22px;line-height:1;font-weight:400;color:#1e6e40;white-space:pre;">10</span>
<div style="position:absolute;left:0px;top:793.5px;width:38.5px;height:1.0px;background:#bcbcbc"></div>
<span style="position:absolute;left:8.91px;top:768.74px;font-family:'Liberation Serif', serif;font-size:22px;line-height:1;font-weight:400;color:#1e6e40;white-space:pre;">11</span>
<div style="position:absolute;left:0px;top:829.5px;width:38.5px;height:1.0px;background:#bcbcbc"></div>
<span style="position:absolute;left:8.50px;top:804.74px;font-family:'Liberation Serif', serif;font-size:22px;line-height:1;font-weight:400;color:#1e6e40;white-space:pre;">12</span>
<div style="position:absolute;left:0px;top:865.5px;width:38.5px;height:1.0px;background:#bcbcbc"></div>
<span style="position:absolute;left:8.00px;top:840.74px;font-family:'Liberation Serif', serif;font-size:22px;line-height:1;font-weight:400;color:#1e6e40;white-space:pre;">13</span>
<div style="position:absolute;left:0px;top:901.5px;width:38.5px;height:1.0px;background:#bcbcbc"></div>
<span style="position:absolute;left:8.00px;top:876.74px;font-family:'Liberation Serif', serif;font-size:22px;line-height:1;font-weight:400;color:#1e6e40;white-space:pre;">14</span>
<div style="position:absolute;left:0px;top:937.5px;width:38.5px;height:1.0px;background:#bcbcbc"></div>
<span style="position:absolute;left:8.00px;top:912.74px;font-family:'Liberation Serif', serif;font-size:22px;line-height:1;font-weight:400;color:#1e6e40;white-space:pre;">15</span>
<div style="position:absolute;left:0px;top:973.5px;width:38.5px;height:1.0px;background:#bcbcbc"></div>
<span style="position:absolute;left:8.00px;top:948.74px;font-family:'Liberation Serif', serif;font-size:22px;line-height:1;font-weight:400;color:#1e6e40;white-space:pre;">16</span>
<div style="position:absolute;left:0px;top:1009.5px;width:38.5px;height:1.0px;background:#bcbcbc"></div>
<span style="position:absolute;left:8.00px;top:984.74px;font-family:'Liberation Serif', serif;font-size:22px;line-height:1;font-weight:400;color:#1e6e40;white-space:pre;">17</span>
<div style="position:absolute;left:40px;top:354.5px;width:1850px;height:46.5px;background:#fff"></div>
<span style="position:absolute;left:460.00px;top:363.14px;font-family:'Liberation Serif', serif;font-size:32px;line-height:1;font-weight:400;color:#44546a;white-space:pre;">Bảng lương công ty ABC</span>
<div style="position:absolute;left:40.5px;top:403px;width:1252.5px;height:1px;background:#fff"></div>
<div style="position:absolute;left:40.5px;top:404px;width:66.0px;height:65px;background:#d9e1f2"></div>
<div style="position:absolute;left:106.5px;top:404px;width:1186.5px;height:65px;background:#a8aebb"></div>
<div style="position:absolute;left:40.5px;top:472px;width:1252.5px;height:481px;background:#c8c8c8"></div>
<div style="position:absolute;left:40.5px;top:469px;width:1252.5px;height:3px;background:#3e5da3"></div>
<div style="position:absolute;left:40.5px;top:505.5px;width:1252.5px;height:1.0px;background:#3e5da3"></div>
<div style="position:absolute;left:40.5px;top:541.5px;width:1252.5px;height:1.0px;background:#3e5da3"></div>
<div style="position:absolute;left:40.5px;top:577.5px;width:1252.5px;height:1.0px;background:#3e5da3"></div>
<div style="position:absolute;left:40.5px;top:613.5px;width:1252.5px;height:1.0px;background:#3e5da3"></div>
<div style="position:absolute;left:40.5px;top:649.5px;width:1252.5px;height:1.0px;background:#3e5da3"></div>
<div style="position:absolute;left:40.5px;top:685.5px;width:1252.5px;height:1.0px;background:#3e5da3"></div>
<div style="position:absolute;left:40.5px;top:721.5px;width:1252.5px;height:1.0px;background:#3e5da3"></div>
<div style="position:absolute;left:40.5px;top:757.5px;width:1252.5px;height:1.0px;background:#3e5da3"></div>
<div style="position:absolute;left:40.5px;top:793.5px;width:1252.5px;height:1.0px;background:#3e5da3"></div>
<div style="position:absolute;left:40.5px;top:829.5px;width:1252.5px;height:1.0px;background:#3e5da3"></div>
<div style="position:absolute;left:40.5px;top:865.5px;width:1252.5px;height:1.0px;background:#3e5da3"></div>
<div style="position:absolute;left:40.5px;top:901.5px;width:1252.5px;height:1.0px;background:#3e5da3"></div>
<div style="position:absolute;left:40.5px;top:937.5px;width:1252.5px;height:1.0px;background:#3e5da3"></div>
<div style="position:absolute;left:40.5px;top:973.5px;width:1252.5px;height:1.0px;background:#3e5da3"></div>
<div style="position:absolute;left:40.5px;top:1009.5px;width:1252.5px;height:1.0px;background:#3e5da3"></div>
<div style="position:absolute;left:106.0px;top:404px;width:1.0px;height:549px;background:#3e5da3"></div>
<div style="position:absolute;left:308.0px;top:404px;width:1.0px;height:549px;background:#3e5da3"></div>
<div style="position:absolute;left:408.0px;top:404px;width:1.0px;height:549px;background:#3e5da3"></div>
<div style="position:absolute;left:560.0px;top:404px;width:1.0px;height:549px;background:#3e5da3"></div>
<div style="position:absolute;left:669.5px;top:404px;width:1.0px;height:549px;background:#3e5da3"></div>
<div style="position:absolute;left:759.5px;top:404px;width:1.0px;height:549px;background:#3e5da3"></div>
<div style="position:absolute;left:892.5px;top:404px;width:1.0px;height:549px;background:#3e5da3"></div>
<div style="position:absolute;left:1024.5px;top:404px;width:1.0px;height:549px;background:#3e5da3"></div>
<div style="position:absolute;left:1154.5px;top:404px;width:1.0px;height:549px;background:#3e5da3"></div>
<span style="position:absolute;left:50.64px;top:443.54px;font-family:'Liberation Serif', serif;font-size:23.2px;line-height:1;font-weight:700;color:#000;white-space:pre;transform:scaleX(0.9594);transform-origin:0 0;">STT</span>
<span style="position:absolute;left:158.00px;top:443.54px;font-family:'Liberation Serif', serif;font-size:23.2px;line-height:1;font-weight:700;color:#000;white-space:pre;transform:scaleX(1.0186);transform-origin:0 0;">Họ và tên</span>
<span style="position:absolute;left:339.60px;top:443.54px;font-family:'Liberation Serif', serif;font-size:23.2px;line-height:1;font-weight:700;color:#000;white-space:pre;transform:scaleX(0.9676);transform-origin:0 0;">Tên</span>
<span style="position:absolute;left:441.60px;top:443.54px;font-family:'Liberation Serif', serif;font-size:23.2px;line-height:1;font-weight:700;color:#000;white-space:pre;transform:scaleX(1.0043);transform-origin:0 0;">Chức vụ</span>
<span style="position:absolute;left:581.50px;top:413.24px;font-family:'Liberation Serif', serif;font-size:23.2px;line-height:1;font-weight:700;color:#000;white-space:pre;">Lương</span>
<span style="position:absolute;left:581.80px;top:443.54px;font-family:'Liberation Serif', serif;font-size:23.2px;line-height:1;font-weight:700;color:#000;white-space:pre;transform:scaleX(0.9967);transform-origin:0 0;">cơ bản</span>
<span style="position:absolute;left:89.50px;top:479.58px;font-family:'Liberation Serif', serif;font-size:24px;line-height:1;font-weight:400;color:#000;white-space:pre;">1</span>
<span style="position:absolute;left:110.20px;top:479.58px;font-family:'Liberation Serif', serif;font-size:24px;line-height:1;font-weight:400;color:#000;white-space:pre;">Ngô Văn Long</span>
<span style="position:absolute;left:312.30px;top:479.58px;font-family:'Liberation Serif', serif;font-size:24px;line-height:1;font-weight:400;color:#000;white-space:pre;">Long</span>
<span style="position:absolute;left:412.00px;top:479.58px;font-family:'Liberation Serif', serif;font-size:24px;line-height:1;font-weight:400;color:#000;white-space:pre;">Giám đốc</span>
<span style="position:absolute;left:610.50px;top:479.58px;font-family:'Liberation Serif', serif;font-size:24px;line-height:1;font-weight:400;color:#000;white-space:pre;">5,000</span>
<span style="position:absolute;left:89.50px;top:515.58px;font-family:'Liberation Serif', serif;font-size:24px;line-height:1;font-weight:400;color:#000;white-space:pre;">2</span>
<span style="position:absolute;left:110.20px;top:515.58px;font-family:'Liberation Serif', serif;font-size:24px;line-height:1;font-weight:400;color:#000;white-space:pre;">Trần Thu Hà</span>
<span style="position:absolute;left:312.30px;top:515.58px;font-family:'Liberation Serif', serif;font-size:24px;line-height:1;font-weight:400;color:#000;white-space:pre;">Hà</span>
<span style="position:absolute;left:412.00px;top:515.58px;font-family:'Liberation Serif', serif;font-size:24px;line-height:1;font-weight:400;color:#000;white-space:pre;">Trưởng phòng</span>
<span style="position:absolute;left:610.50px;top:515.58px;font-family:'Liberation Serif', serif;font-size:24px;line-height:1;font-weight:400;color:#000;white-space:pre;">4,000</span>
<span style="position:absolute;left:88.50px;top:551.58px;font-family:'Liberation Serif', serif;font-size:24px;line-height:1;font-weight:400;color:#000;white-space:pre;">3</span>
<span style="position:absolute;left:110.20px;top:551.58px;font-family:'Liberation Serif', serif;font-size:24px;line-height:1;font-weight:400;color:#000;white-space:pre;">Nguyễn Thị Vân</span>
<span style="position:absolute;left:312.30px;top:551.58px;font-family:'Liberation Serif', serif;font-size:24px;line-height:1;font-weight:400;color:#000;white-space:pre;">Vân</span>
<span style="position:absolute;left:412.00px;top:551.58px;font-family:'Liberation Serif', serif;font-size:24px;line-height:1;font-weight:400;color:#000;white-space:pre;">Nhân viên</span>
<span style="position:absolute;left:610.50px;top:551.58px;font-family:'Liberation Serif', serif;font-size:24px;line-height:1;font-weight:400;color:#000;white-space:pre;">1,000</span>
<span style="position:absolute;left:88.50px;top:587.58px;font-family:'Liberation Serif', serif;font-size:24px;line-height:1;font-weight:400;color:#000;white-space:pre;">4</span>
<span style="position:absolute;left:110.20px;top:587.58px;font-family:'Liberation Serif', serif;font-size:24px;line-height:1;font-weight:400;color:#000;white-space:pre;">Ngô Thành Long</span>
<span style="position:absolute;left:312.30px;top:587.58px;font-family:'Liberation Serif', serif;font-size:24px;line-height:1;font-weight:400;color:#000;white-space:pre;">Long</span>
<span style="position:absolute;left:412.00px;top:587.58px;font-family:'Liberation Serif', serif;font-size:24px;line-height:1;font-weight:400;color:#000;white-space:pre;">Nhân viên</span>
<span style="position:absolute;left:610.50px;top:587.58px;font-family:'Liberation Serif', serif;font-size:24px;line-height:1;font-weight:400;color:#000;white-space:pre;">1,000</span>
<span style="position:absolute;left:88.50px;top:623.58px;font-family:'Liberation Serif', serif;font-size:24px;line-height:1;font-weight:400;color:#000;white-space:pre;">5</span>
<span style="position:absolute;left:110.20px;top:623.58px;font-family:'Liberation Serif', serif;font-size:24px;line-height:1;font-weight:400;color:#000;white-space:pre;">Đinh Thị Hoa</span>
<span style="position:absolute;left:312.30px;top:623.58px;font-family:'Liberation Serif', serif;font-size:24px;line-height:1;font-weight:400;color:#000;white-space:pre;">Hoa</span>
<span style="position:absolute;left:412.00px;top:623.58px;font-family:'Liberation Serif', serif;font-size:24px;line-height:1;font-weight:400;color:#000;white-space:pre;">Phó phòng</span>
<span style="position:absolute;left:610.50px;top:623.58px;font-family:'Liberation Serif', serif;font-size:24px;line-height:1;font-weight:400;color:#000;white-space:pre;">3,000</span>
<span style="position:absolute;left:88.50px;top:659.58px;font-family:'Liberation Serif', serif;font-size:24px;line-height:1;font-weight:400;color:#000;white-space:pre;">6</span>
<span style="position:absolute;left:110.20px;top:659.58px;font-family:'Liberation Serif', serif;font-size:24px;line-height:1;font-weight:400;color:#000;white-space:pre;">Trần Thanh Hà</span>
<span style="position:absolute;left:312.30px;top:659.58px;font-family:'Liberation Serif', serif;font-size:24px;line-height:1;font-weight:400;color:#000;white-space:pre;">Hà</span>
<span style="position:absolute;left:412.00px;top:659.58px;font-family:'Liberation Serif', serif;font-size:24px;line-height:1;font-weight:400;color:#000;white-space:pre;">Nhân viên</span>
<span style="position:absolute;left:610.50px;top:659.58px;font-family:'Liberation Serif', serif;font-size:24px;line-height:1;font-weight:400;color:#000;white-space:pre;">1,000</span>
<span style="position:absolute;left:88.50px;top:695.58px;font-family:'Liberation Serif', serif;font-size:24px;line-height:1;font-weight:400;color:#000;white-space:pre;">7</span>
<span style="position:absolute;left:110.20px;top:695.58px;font-family:'Liberation Serif', serif;font-size:24px;line-height:1;font-weight:400;color:#000;white-space:pre;">Ngô Bá An</span>
<span style="position:absolute;left:312.30px;top:695.58px;font-family:'Liberation Serif', serif;font-size:24px;line-height:1;font-weight:400;color:#000;white-space:pre;">An</span>
<span style="position:absolute;left:412.00px;top:695.58px;font-family:'Liberation Serif', serif;font-size:24px;line-height:1;font-weight:400;color:#000;white-space:pre;">Chuyên viên</span>
<span style="position:absolute;left:610.50px;top:695.58px;font-family:'Liberation Serif', serif;font-size:24px;line-height:1;font-weight:400;color:#000;white-space:pre;">1,500</span>
<span style="position:absolute;left:88.50px;top:731.58px;font-family:'Liberation Serif', serif;font-size:24px;line-height:1;font-weight:400;color:#000;white-space:pre;">8</span>
<span style="position:absolute;left:110.20px;top:731.58px;font-family:'Liberation Serif', serif;font-size:24px;line-height:1;font-weight:400;color:#000;white-space:pre;">Lê Đình Bá</span>
<span style="position:absolute;left:312.30px;top:731.58px;font-family:'Liberation Serif', serif;font-size:24px;line-height:1;font-weight:400;color:#000;white-space:pre;">Bá</span>
<span style="position:absolute;left:412.00px;top:731.58px;font-family:'Liberation Serif', serif;font-size:24px;line-height:1;font-weight:400;color:#000;white-space:pre;">Nhân viên</span>
<span style="position:absolute;left:610.50px;top:731.58px;font-family:'Liberation Serif', serif;font-size:24px;line-height:1;font-weight:400;color:#000;white-space:pre;">1,000</span>
<span style="position:absolute;left:88.50px;top:767.58px;font-family:'Liberation Serif', serif;font-size:24px;line-height:1;font-weight:400;color:#000;white-space:pre;">9</span>
<span style="position:absolute;left:110.20px;top:767.58px;font-family:'Liberation Serif', serif;font-size:24px;line-height:1;font-weight:400;color:#000;white-space:pre;">Phạm Thị Mây</span>
<span style="position:absolute;left:312.30px;top:767.58px;font-family:'Liberation Serif', serif;font-size:24px;line-height:1;font-weight:400;color:#000;white-space:pre;">Mây</span>
<span style="position:absolute;left:412.00px;top:767.58px;font-family:'Liberation Serif', serif;font-size:24px;line-height:1;font-weight:400;color:#000;white-space:pre;">Nhân viên</span>
<span style="position:absolute;left:610.50px;top:767.58px;font-family:'Liberation Serif', serif;font-size:24px;line-height:1;font-weight:400;color:#000;white-space:pre;">1,000</span>
<span style="position:absolute;left:76.50px;top:803.58px;font-family:'Liberation Serif', serif;font-size:24px;line-height:1;font-weight:400;color:#000;white-space:pre;">10</span>
<span style="position:absolute;left:110.20px;top:803.58px;font-family:'Liberation Serif', serif;font-size:24px;line-height:1;font-weight:400;color:#000;white-space:pre;">Lý Chính Cường</span>
<span style="position:absolute;left:312.30px;top:803.58px;font-family:'Liberation Serif', serif;font-size:24px;line-height:1;font-weight:400;color:#000;white-space:pre;">Cường</span>
<span style="position:absolute;left:412.00px;top:803.58px;font-family:'Liberation Serif', serif;font-size:24px;line-height:1;font-weight:400;color:#000;white-space:pre;">Chuyên viên</span>
<span style="position:absolute;left:610.50px;top:803.58px;font-family:'Liberation Serif', serif;font-size:24px;line-height:1;font-weight:400;color:#000;white-space:pre;">1,500</span>
<span style="position:absolute;left:78.39px;top:839.58px;font-family:'Liberation Serif', serif;font-size:24px;line-height:1;font-weight:400;color:#000;white-space:pre;">11</span>
<span style="position:absolute;left:110.20px;top:839.58px;font-family:'Liberation Serif', serif;font-size:24px;line-height:1;font-weight:400;color:#000;white-space:pre;">Dương Thị Hoa</span>
<span style="position:absolute;left:312.30px;top:839.58px;font-family:'Liberation Serif', serif;font-size:24px;line-height:1;font-weight:400;color:#000;white-space:pre;">Hoa</span>
<span style="position:absolute;left:412.00px;top:839.58px;font-family:'Liberation Serif', serif;font-size:24px;line-height:1;font-weight:400;color:#000;white-space:pre;">Nhân viên</span>
<span style="position:absolute;left:610.50px;top:839.58px;font-family:'Liberation Serif', serif;font-size:24px;line-height:1;font-weight:400;color:#000;white-space:pre;">1,000</span>
<span style="position:absolute;left:77.50px;top:875.58px;font-family:'Liberation Serif', serif;font-size:24px;line-height:1;font-weight:400;color:#000;white-space:pre;">12</span>
<span style="position:absolute;left:110.20px;top:875.58px;font-family:'Liberation Serif', serif;font-size:24px;line-height:1;font-weight:400;color:#000;white-space:pre;">Trần Đình Hải</span>
<span style="position:absolute;left:312.30px;top:875.58px;font-family:'Liberation Serif', serif;font-size:24px;line-height:1;font-weight:400;color:#000;white-space:pre;">Hải</span>
<span style="position:absolute;left:412.00px;top:875.58px;font-family:'Liberation Serif', serif;font-size:24px;line-height:1;font-weight:400;color:#000;white-space:pre;">Nhân viên</span>
<span style="position:absolute;left:610.50px;top:875.58px;font-family:'Liberation Serif', serif;font-size:24px;line-height:1;font-weight:400;color:#000;white-space:pre;">1,000</span>
<span style="position:absolute;left:76.50px;top:911.58px;font-family:'Liberation Serif', serif;font-size:24px;line-height:1;font-weight:400;color:#000;white-space:pre;">13</span>
<span style="position:absolute;left:110.20px;top:911.58px;font-family:'Liberation Serif', serif;font-size:24px;line-height:1;font-weight:400;color:#000;white-space:pre;">Lý Phương Oanh</span>
<span style="position:absolute;left:312.30px;top:911.58px;font-family:'Liberation Serif', serif;font-size:24px;line-height:1;font-weight:400;color:#000;white-space:pre;">Oanh</span>
<span style="position:absolute;left:412.00px;top:911.58px;font-family:'Liberation Serif', serif;font-size:24px;line-height:1;font-weight:400;color:#000;white-space:pre;">Chuyên viên</span>
<span style="position:absolute;left:610.50px;top:911.58px;font-family:'Liberation Serif', serif;font-size:24px;line-height:1;font-weight:400;color:#000;white-space:pre;">1,500</span>
<span style="position:absolute;left:76.50px;top:947.58px;font-family:'Liberation Serif', serif;font-size:24px;line-height:1;font-weight:400;color:#000;white-space:pre;">14</span>
<span style="position:absolute;left:110.20px;top:947.58px;font-family:'Liberation Serif', serif;font-size:24px;line-height:1;font-weight:400;color:#000;white-space:pre;">Nguyễn Đức Vinh</span>
<span style="position:absolute;left:312.30px;top:947.58px;font-family:'Liberation Serif', serif;font-size:24px;line-height:1;font-weight:400;color:#000;white-space:pre;">Vinh</span>
<span style="position:absolute;left:412.00px;top:947.58px;font-family:'Liberation Serif', serif;font-size:24px;line-height:1;font-weight:400;color:#000;white-space:pre;">Nhân viên</span>
<span style="position:absolute;left:610.50px;top:947.58px;font-family:'Liberation Serif', serif;font-size:24px;line-height:1;font-weight:400;color:#000;white-space:pre;">1,000</span>
<span style="position:absolute;left:731.00px;top:947.58px;font-family:'Liberation Serif', serif;font-size:24px;line-height:1;font-weight:400;color:#000;white-space:pre;">24</span>
<span style="position:absolute;left:822.00px;top:947.58px;font-family:'Liberation Serif', serif;font-size:24px;line-height:1;font-weight:400;color:#000;white-space:pre;">24,000</span>
<span style="position:absolute;left:1009.00px;top:947.58px;font-family:'Liberation Serif', serif;font-size:24px;line-height:1;font-weight:400;color:#000;white-space:pre;">2</span>
<span style="position:absolute;left:1139.00px;top:947.58px;font-family:'Liberation Serif', serif;font-size:24px;line-height:1;font-weight:400;color:#000;white-space:pre;">1</span>
<span style="position:absolute;left:1222.00px;top:947.58px;font-family:'Liberation Serif', serif;font-size:24px;line-height:1;font-weight:400;color:#000;white-space:pre;">24,000</span>
<div style="position:absolute;left:38.5px;top:401px;width:1254.5px;height:2px;background:#1e6e40"></div>
<div style="position:absolute;left:38.5px;top:401px;width:2.0px;height:552px;background:#1e6e40"></div>
<div style="position:absolute;left:1292px;top:401px;width:2px;height:552px;background:#1e6e40"></div>
<div style="position:absolute;left:1294px;top:354.5px;width:596px;height:598.5px;background:#fff"></div>
<div style="position:absolute;left:1889px;top:354.5px;width:1px;height:598.5px;background:#a8a8a8"></div>
<div style="position:absolute;left:1294px;top:577.5px;width:595px;height:1.0px;background:#a8a8a8"></div>
<div style="position:absolute;left:1294px;top:354px;width:595px;height:224px;overflow:hidden">
</div>
<span style="position:absolute;left:1483.50px;top:428.46px;font-family:'Liberation Serif', serif;font-size:28px;line-height:1;font-weight:400;color:#000;white-space:pre;">bảng lương theo thứ tự Tên tăng dần</span>
<span style="position:absolute;left:1483.50px;top:492.56px;font-family:'Liberation Serif', serif;font-size:28px;line-height:1;font-weight:400;color:#000;white-space:pre;">bảng lương theo thứ tự cột Thực nhận giảm dần</span>
<div style="position:absolute;left:1890px;top:354.5px;width:2px;height:598.5px;background:#f0f0f0"></div>
</div>
<div style="position:absolute;left:1892px;top:327px;width:28px;height:626px;background:#f0f0f0"></div>
<svg style="position:absolute;left:1896px;top:333px;" width="18" height="14" viewBox="0 0 18 14"><path d="M2.5 12 L9 2.5 L15.5 12 Z" fill="#6e6e6e" stroke="#6e6e6e" stroke-width="1.5" stroke-linejoin="round"/></svg>
<div style="position:absolute;left:1899.3px;top:353px;width:11.5px;height:489px;background:#707070;border-radius:6px"></div>
<svg style="position:absolute;left:1896px;top:936px;" width="18" height="14" viewBox="0 0 18 14"><path d="M2.5 2 L9 11.5 L15.5 2 Z" fill="#6e6e6e" stroke="#6e6e6e" stroke-width="1.5" stroke-linejoin="round"/></svg>
<div style="position:absolute;left:0px;top:953px;width:1892px;height:34px;background:#e6e6e6"></div>
<div style="position:absolute;left:0px;top:953px;width:1920px;height:1px;background:#c6c6c6"></div>
<svg style="position:absolute;left:26px;top:962px;" width="12" height="16" viewBox="0 0 12 16"><path d="M9.5 2 L3 8 L9.5 14 Z" fill="#c4c4c4"/></svg>
<svg style="position:absolute;left:60px;top:962px;" width="12" height="16" viewBox="0 0 12 16"><path d="M2.5 2 L9 8 L2.5 14 Z" fill="#c4c4c4"/></svg>
<div style="position:absolute;left:118px;top:953px;width:81px;height:31px;background:#fff;border:1px solid #d0d0d0;border-top:none;box-sizing:border-box"></div>
<div style="position:absolute;left:118px;top:981px;width:81px;height:3px;background:#1e6e40"></div>
<span style="position:absolute;left:129.95px;top:958.05px;font-family:'Liberation Sans', sans-serif;font-size:19px;line-height:1;font-weight:700;color:#1e7145;white-space:pre;transform:scaleX(1.0548);transform-origin:0 0;">DeBai</span>
<span style="position:absolute;left:211.60px;top:958.05px;font-family:'Liberation Sans', sans-serif;font-size:19px;line-height:1;font-weight:400;color:#444;white-space:pre;transform:scaleX(0.9141);transform-origin:0 0;">Cau1</span>
<div style="position:absolute;left:269px;top:957px;width:1.3000000000000114px;height:25px;background:#b4b4b4"></div>
<span style="position:absolute;left:282.40px;top:958.05px;font-family:'Liberation Sans', sans-serif;font-size:19px;line-height:1;font-weight:400;color:#444;white-space:pre;transform:scaleX(0.9564);transform-origin:0 0;">Cau2</span>
<div style="position:absolute;left:339px;top:957px;width:1.3000000000000114px;height:25px;background:#b4b4b4"></div>
<svg style="position:absolute;left:378px;top:958px;" width="24" height="24" viewBox="0 0 24 24"><circle cx="12" cy="12" r="10.3" fill="none" stroke="#777" stroke-width="1.5"/><path d="M12 6.5 V17.5 M6.5 12 H17.5" stroke="#555" stroke-width="1.6"/></svg>
<div style="position:absolute;left:1133px;top:954px;width:34px;height:33px;background:#f0f0f0"></div>
<div style="position:absolute;left:1147.5px;top:962px;width:3.0px;height:3px;background:#9a9a9a;border-radius:50%"></div>
<div style="position:absolute;left:1147.5px;top:968.5px;width:3.0px;height:3.0px;background:#9a9a9a;border-radius:50%"></div>
<div style="position:absolute;left:1147.5px;top:975px;width:3.0px;height:3px;background:#9a9a9a;border-radius:50%"></div>
<div style="position:absolute;left:1167px;top:954px;width:725px;height:29px;background:#f0f0f0"></div>
<svg style="position:absolute;left:1172px;top:961px;" width="16" height="17" viewBox="0 0 16 17"><path d="M12.5 2.5 L3 8.5 L12.5 14.5 Z" fill="#6e6e6e" stroke="#6e6e6e" stroke-width="1.5" stroke-linejoin="round"/></svg>
<div style="position:absolute;left:1193px;top:964px;width:544px;height:12.5px;background:#707070;border-radius:6px"></div>
<svg style="position:absolute;left:1871px;top:961px;" width="16" height="17" viewBox="0 0 16 17"><path d="M3.5 2.5 L13 8.5 L3.5 14.5 Z" fill="#6e6e6e" stroke="#6e6e6e" stroke-width="1.5" stroke-linejoin="round"/></svg>
<div style="position:absolute;left:1892px;top:954px;width:28px;height:33px;background:#e3e3e3"></div>
<div style="position:absolute;left:0px;top:987px;width:1920px;height:32px;background:#f0f0f0"></div>
<div style="position:absolute;left:0px;top:986.5px;width:1920px;height:1.0px;background:#d9d9d9"></div>
<div style="position:absolute;left:0px;top:1019px;width:1920px;height:2px;background:#1b2b36"></div>
<span style="position:absolute;left:9.67px;top:997.20px;font-family:'Liberation Sans', sans-serif;font-size:16px;line-height:1;font-weight:400;color:#333;white-space:pre;transform:scaleX(0.9326);transform-origin:0 0;">Ready</span>
<svg style="position:absolute;left:79px;top:993px;" width="26" height="23" viewBox="0 0 26 23"><g fill="none" stroke="#333" stroke-width="1.5"><path d="M11 19.5 H3 V3 H23.5 V9"/><line x1="3" y1="6.5" x2="23.5" y2="6.5"/><line x1="6" y1="11" x2="10" y2="11"/><line x1="6" y1="14.5" x2="9" y2="14.5"/><circle cx="17" cy="15" r="6"/></g><circle cx="17" cy="15" r="2.8" fill="#333"/></svg>
<svg style="position:absolute;left:126px;top:991px;" width="27" height="26" viewBox="0 0 27 26"><g fill="none" stroke="#333" stroke-width="1.5" stroke-linecap="round" stroke-linejoin="round"><circle cx="12" cy="4.5" r="2.8"/><path d="M2.5 6 Q6 10 10 9.5 L10 14 Q9 19 6 22 Q5 24 8 23.5"/><path d="M22 6 Q18 10 14 9.5 V13"/><path d="M13 19 L16.5 23 L24.5 14.5"/></g></svg>
<span style="position:absolute;left:155.00px;top:997.20px;font-family:'Liberation Sans', sans-serif;font-size:16px;line-height:1;font-weight:400;color:#262626;white-space:pre;transform:scaleX(0.9595);transform-origin:0 0;">Accessibility: Good to go</span>
<span style="position:absolute;left:1069.40px;top:996.60px;font-family:'Liberation Sans', sans-serif;font-size:16px;line-height:1;font-weight:400;color:#262626;white-space:pre;transform:scaleX(0.9609);transform-origin:0 0;">Average: 12312.29524</span>
<span style="position:absolute;left:1249.00px;top:996.60px;font-family:'Liberation Sans', sans-serif;font-size:16px;line-height:1;font-weight:400;color:#262626;white-space:pre;transform:scaleX(0.9568);transform-origin:0 0;">Count: 160</span>
<span style="position:absolute;left:1346.30px;top:996.60px;font-family:'Liberation Sans', sans-serif;font-size:16px;line-height:1;font-weight:400;color:#262626;white-space:pre;transform:scaleX(0.9666);transform-origin:0 0;">Sum: 1292791</span>
<div style="position:absolute;left:1475px;top:987.5px;width:60px;height:31.5px;background:#dedede"></div>
<svg style="position:absolute;left:1493px;top:992px;" width="22" height="22" viewBox="0 0 22 22"><g fill="none" stroke="#333" stroke-width="1.5"><rect x="1.5" y="1.5" width="19" height="19"/><line x1="7.8" y1="1.5" x2="7.8" y2="20.5"/><line x1="14.2" y1="1.5" x2="14.2" y2="20.5"/><line x1="1.5" y1="7.8" x2="20.5" y2="7.8"/><line x1="1.5" y1="14.2" x2="20.5" y2="14.2"/></g></svg>
<svg style="position:absolute;left:1553px;top:992px;" width="24" height="22" viewBox="0 0 24 22"><g fill="none" stroke="#333" stroke-width="1.5"><rect x="1.5" y="1.5" width="20.5" height="19"/><rect x="6" y="5" width="11.5" height="12"/><line x1="8.5" y1="8.5" x2="15" y2="8.5"/><line x1="8.5" y1="11" x2="15" y2="11"/><line x1="8.5" y1="13.5" x2="15" y2="13.5"/></g></svg>
<svg style="position:absolute;left:1613px;top:992px;" width="24" height="22" viewBox="0 0 24 22"><g fill="none" stroke="#333" stroke-width="1.5"><rect x="1.5" y="1.5" width="20.5" height="19"/><path d="M1.5 13.5 H12 V1.5"/><line x1="6.5" y1="1.5" x2="6.5" y2="9"/></g></svg>
<div style="position:absolute;left:1662.5px;top:1003px;width:11.5px;height:1.5px;background:#555"></div>
<div style="position:absolute;left:1682.7px;top:1003px;width:148.29999999999995px;height:2px;background:#666"></div>
<div style="position:absolute;left:1752.8px;top:995px;width:8.400000000000091px;height:17.200000000000045px;background:#666"></div>
<div style="position:absolute;left:1838.8px;top:1003.2px;width:11.799999999999955px;height:1.5px;background:#555"></div>
<div style="position:absolute;left:1844px;top:997.5px;width:1.5px;height:13.0px;background:#555"></div>
<span style="position:absolute;left:1869.33px;top:996.60px;font-family:'Liberation Sans', sans-serif;font-size:16px;line-height:1;font-weight:400;color:#262626;white-space:pre;transform:scaleX(0.9749);transform-origin:0 0;">100%</span>
<div style="position:absolute;left:657px;top:301px;width:827px;height:646px;background:#f0f0f0;border:1px solid #6d6d6d;box-sizing:border-box;box-shadow:0 0 10px 3px rgba(0,0,0,.14)"></div>
<div style="position:absolute;left:658px;top:302px;width:825px;height:44px;background:#fff"></div>
<span style="position:absolute;left:668.72px;top:315.50px;font-family:'Liberation Sans', sans-serif;font-size:18px;line-height:1;font-weight:400;color:#000;white-space:pre;transform:scaleX(0.9840);transform-origin:0 0;">Name Manager</span>
<span style="position:absolute;left:1374.60px;top:313.38px;font-family:'Liberation Sans', sans-serif;font-size:20.5px;line-height:1;font-weight:400;color:#000;white-space:pre;transform:scaleX(0.7818);transform-origin:0 0;">?</span>
<svg style="position:absolute;left:1439px;top:314px;" width="19" height="19" viewBox="0 0 19 19"><g stroke="#111" stroke-width="1.4"><line x1="1.5" y1="1.5" x2="17.5" y2="17.5"/><line x1="17.5" y1="1.5" x2="1.5" y2="17.5"/></g></svg>
<div style="position:absolute;left:668px;top:357px;width:124px;height:36px;background:#e1e1e1;border:1px solid #adadad;box-sizing:border-box"></div>
<div style="position:absolute;left:808px;top:357px;width:124px;height:36px;background:#e1e1e1;border:1px solid #adadad;box-sizing:border-box"></div>
<div style="position:absolute;left:948px;top:357px;width:124px;height:36px;background:#e1e1e1;border:1px solid #adadad;box-sizing:border-box"></div>
<div style="position:absolute;left:1349px;top:358px;width:123px;height:35px;background:#e1e1e1;border:1px solid #adadad;box-sizing:border-box"></div>
<span style="position:absolute;left:707.99px;top:367.62px;font-family:'Liberation Sans', sans-serif;font-size:15.5px;line-height:1;font-weight:400;color:#000;white-space:pre;transform:scaleX(1.0058);transform-origin:0 0;">New...</span>
<div style="position:absolute;left:709px;top:382px;width:12px;height:1.1999999999999886px;background:#000"></div>
<span style="position:absolute;left:851.58px;top:367.62px;font-family:'Liberation Sans', sans-serif;font-size:15.5px;line-height:1;font-weight:400;color:#000;white-space:pre;transform:scaleX(0.9164);transform-origin:0 0;">Edit...</span>
<div style="position:absolute;left:852.5px;top:382px;width:9.0px;height:1.1999999999999886px;background:#000"></div>
<span style="position:absolute;left:986.98px;top:367.62px;font-family:'Liberation Sans', sans-serif;font-size:15.5px;line-height:1;font-weight:400;color:#000;white-space:pre;transform:scaleX(1.0189);transform-origin:0 0;">Delete</span>
<div style="position:absolute;left:988px;top:382px;width:11.5px;height:1.1999999999999886px;background:#000"></div>
<span style="position:absolute;left:1384.26px;top:368.32px;font-family:'Liberation Sans', sans-serif;font-size:15.5px;line-height:1;font-weight:400;color:#000;white-space:pre;transform:scaleX(1.0426);transform-origin:0 0;">Filter</span>
<div style="position:absolute;left:1385.3px;top:383px;width:7.7000000000000455px;height:1.1999999999999886px;background:#000"></div>
<svg style="position:absolute;left:1424px;top:371px;" width="10" height="7" viewBox="0 0 10 7"><path d="M0.5 0.5 H8.5 L4.5 5 Z" fill="#000"/></svg>
<div style="position:absolute;left:668px;top:399px;width:805px;height:421px;background:#fff;border:1px solid #828790;box-sizing:border-box"></div>
<div style="position:absolute;left:840.0px;top:401px;width:1.0px;height:26.5px;background:#e5e5e5"></div>
<div style="position:absolute;left:1019.7px;top:401px;width:1.0px;height:26.5px;background:#e5e5e5"></div>
<div style="position:absolute;left:1200.0px;top:401px;width:1.0px;height:26.5px;background:#e5e5e5"></div>
<div style="position:absolute;left:1298.8px;top:401px;width:1.0px;height:26.5px;background:#e5e5e5"></div>
<span style="position:absolute;left:675.69px;top:408.05px;font-family:'Liberation Sans', sans-serif;font-size:15px;line-height:1;font-weight:400;color:#000;white-space:pre;transform:scaleX(1.0085);transform-origin:0 0;">Name</span>
<span style="position:absolute;left:847.50px;top:408.05px;font-family:'Liberation Sans', sans-serif;font-size:15px;line-height:1;font-weight:400;color:#000;white-space:pre;transform:scaleX(1.0296);transform-origin:0 0;">Value</span>
<span style="position:absolute;left:1026.51px;top:408.05px;font-family:'Liberation Sans', sans-serif;font-size:15px;line-height:1;font-weight:400;color:#000;white-space:pre;transform:scaleX(0.9865);transform-origin:0 0;">Refers To</span>
<span style="position:absolute;left:1206.80px;top:408.05px;font-family:'Liberation Sans', sans-serif;font-size:15px;line-height:1;font-weight:400;color:#000;white-space:pre;transform:scaleX(0.9837);transform-origin:0 0;">Scope</span>
<span style="position:absolute;left:1306.00px;top:408.05px;font-family:'Liberation Sans', sans-serif;font-size:15px;line-height:1;font-weight:400;color:#000;white-space:pre;transform:scaleX(1.0327);transform-origin:0 0;">Comment</span>
<div style="position:absolute;left:698px;top:428px;width:772px;height:25px;background:#0078d7;outline:1px dotted #f5a442;outline-offset:-1px"></div>
<svg style="position:absolute;left:673px;top:429px;" width="26" height="22" viewBox="0 0 26 22"><rect x="1" y="1" width="24" height="20" fill="#1e5fa8"/><g fill="#6aaee6"><rect x="2.5" y="2.5" width="6" height="4.5"/><rect x="10" y="2.5" width="6" height="4.5"/><rect x="17.5" y="2.5" width="6" height="4.5"/><rect x="2.5" y="8.5" width="6" height="5"/><rect x="10" y="8.5" width="6" height="5"/><rect x="17.5" y="8.5" width="6" height="5"/><rect x="2.5" y="15" width="6" height="4.5"/><rect x="10" y="15" width="6" height="4.5"/><rect x="17.5" y="15" width="6" height="4.5"/></g></svg>
<span style="position:absolute;left:701.00px;top:433.55px;font-family:'Liberation Sans', sans-serif;font-size:15px;line-height:1;font-weight:400;color:#fff;white-space:pre;transform:scaleX(0.9514);transform-origin:0 0;">data</span>
<span style="position:absolute;left:847.50px;top:433.55px;font-family:'Liberation Sans', sans-serif;font-size:15px;line-height:1;font-weight:400;color:#fff;white-space:pre;transform:scaleX(0.9665);transform-origin:0 0;">{"STT","Họ và tên","Tên...</span>
<span style="position:absolute;left:1027.50px;top:433.55px;font-family:'Liberation Sans', sans-serif;font-size:15px;line-height:1;font-weight:400;color:#fff;white-space:pre;transform:scaleX(1.0224);transform-origin:0 0;">=DeBai!$A$2:$J$17</span>
<span style="position:absolute;left:1206.80px;top:433.55px;font-family:'Liberation Sans', sans-serif;font-size:15px;line-height:1;font-weight:400;color:#fff;white-space:pre;transform:scaleX(1.0627);transform-origin:0 0;">Workbook</span>
<div style="position:absolute;left:666px;top:404px;width:808px;height:416px;border:4px solid #f00;box-sizing:border-box;box-shadow:0 1px 8px rgba(0,0,0,.45), inset 0 1px 9px rgba(0,0,0,.35)"></div>
<span style="position:absolute;left:667.31px;top:825.83px;font-family:'Liberation Sans', sans-serif;font-size:15.5px;line-height:1;font-weight:400;color:#000;white-space:pre;transform:scaleX(0.9941);transform-origin:0 0;">Refers to:</span>
<div style="position:absolute;left:668.3px;top:840.5px;width:10.200000000000045px;height:1.2000000000000455px;background:#000"></div>
<div style="position:absolute;left:669px;top:850px;width:27px;height:27px;background:#e6e6e6;border:1px solid #bdbdbd;box-sizing:border-box"></div>
<div style="position:absolute;left:698px;top:850px;width:27px;height:27px;background:#e6e6e6;border:1px solid #bdbdbd;box-sizing:border-box"></div>
<svg style="position:absolute;left:672px;top:853px;" width="22" height="22" viewBox="0 0 22 22"><g stroke="#9a9a9a" stroke-width="2.2"><line x1="3" y1="3" x2="19" y2="19"/><line x1="19" y1="3" x2="3" y2="19"/></g></svg>
<svg style="position:absolute;left:700px;top:853px;" width="23" height="22" viewBox="0 0 23 22"><path d="M3 11 L8.5 18 L20 3.5" fill="none" stroke="#a8a8a8" stroke-width="2.6"/></svg>
<div style="position:absolute;left:741px;top:848.5px;width:732px;height:31.5px;background:#fff;border:1px solid #a6a6a6;box-sizing:border-box"></div>
<div style="position:absolute;left:1440px;top:849.5px;width:32px;height:29.5px;background:#e3e3e3;border-left:1px solid #c8c8c8;box-sizing:border-box"></div>
<div style="position:absolute;left:1445px;top:853.5px;width:22px;height:20.5px;background:#fff"></div>
<svg style="position:absolute;left:1447px;top:854px;" width="18" height="20" viewBox="0 0 18 20"><path d="M9 2 L15 8.5 H11 V14 H7 V8.5 H3 Z" fill="#000"/><rect x="3" y="16.5" width="12" height="1.4" fill="#000"/></svg>
<span style="position:absolute;left:747.50px;top:855.53px;font-family:'Liberation Sans', sans-serif;font-size:15.5px;line-height:1;font-weight:400;color:#000;white-space:pre;transform:scaleX(0.9841);transform-origin:0 0;">=DeBai!$A$2:$J$17</span>
<div style="position:absolute;left:1348px;top:898px;width:124px;height:36px;background:#e1e1e1;border:1px solid #adadad;box-sizing:border-box"></div>
<span style="position:absolute;left:1391.50px;top:908.43px;font-family:'Liberation Sans', sans-serif;font-size:15.5px;line-height:1;font-weight:400;color:#000;white-space:pre;transform:scaleX(0.9562);transform-origin:0 0;">Close</span>
<svg style="position:absolute;left:1468px;top:932px;" width="14" height="14" viewBox="0 0 14 14"><g stroke="#a0a0a0" stroke-width="1.2"><line x1="13" y1="2" x2="2" y2="13"/><line x1="13" y1="6" x2="6" y2="13"/><line x1="13" y1="10" x2="10" y2="13"/></g></svg>
<svg style="position:absolute;left:0px;top:0px;" width="22" height="30" viewBox="0 0 22 30"><path d="M1 1 V23 L6.5 17.5 L10.5 26.5 L14 25 L10 16.5 H17.5 Z" fill="#fff" stroke="#000" stroke-width="1.3" stroke-linejoin="miter"/></svg>
</body></html>
